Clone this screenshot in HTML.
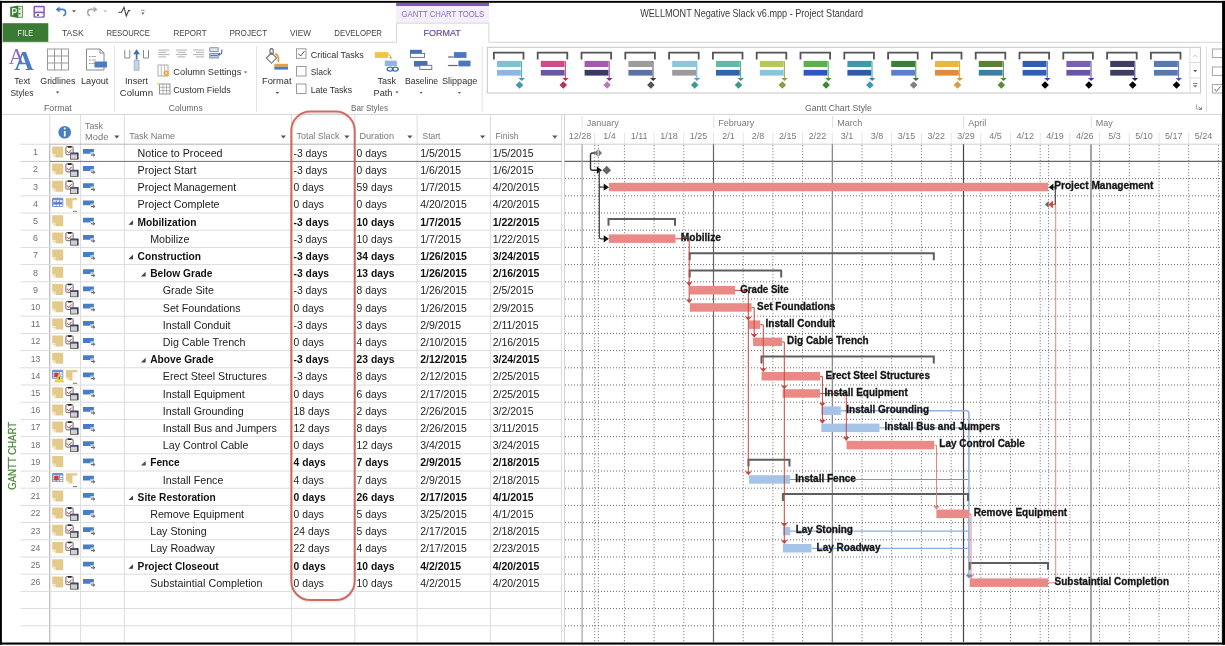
<!DOCTYPE html>
<html><head><meta charset="utf-8"><title>WELLMONT Negative Slack v6.mpp - Project Standard</title>
<style>html,body{margin:0;padding:0;background:#fff;overflow:hidden;width:1225px;height:646px}
svg{display:block;font-family:"Liberation Sans",sans-serif;will-change:transform}</style></head>
<body>
<svg width="1225" height="646" viewBox="0 0 1225 646" font-family="Liberation Sans, sans-serif">
<rect x="0.00" y="0.00" width="1225.00" height="646.00" fill="#fff"/>
<rect x="17.60" y="6.40" width="5.00" height="10.90" fill="#ddf0d6" stroke="#5f8f58" stroke-width="0.9"/>
<path d="M10.2 7.0 L18.2 5.6 V17.9 L10.2 16.6 Z" fill="#3b7a37" stroke="none" stroke-width="1"/>
<rect x="18.60" y="8.30" width="1.80" height="1.30" fill="#3b7a37"/>
<rect x="18.60" y="13.00" width="1.80" height="1.30" fill="#3b7a37"/>
<path d="M12.6 15.3 V8.6 H14.6 Q16.4 8.6 16.4 10.6 Q16.4 12.5 14.6 12.5 H12.6" fill="none" stroke="#dcf0d4" stroke-width="1.3"/>
<rect x="34.20" y="6.60" width="9.90" height="10.30" fill="#f4eefb" stroke="#8a5cb8" stroke-width="1.5" rx="0.6"/>
<rect x="34.20" y="11.60" width="9.90" height="1.80" fill="#8a5cb8"/>
<rect x="36.30" y="13.40" width="5.80" height="3.10" fill="#fff"/>
<rect x="37.20" y="14.20" width="1.60" height="1.80" fill="#444"/>
<path d="M57.5 9.4 H62.3 Q65.6 9.4 65.6 12.4 Q65.6 15 63.2 15.8" fill="none" stroke="#4a7cc0" stroke-width="1.6"/>
<path d="M55.6 9.4 L59.6 6.4 L59.6 12.4 Z" fill="#4a7cc0" stroke="none" stroke-width="1"/>
<path d="M72 10.2 h4 l-2 2.3 z" fill="#555" stroke="none" stroke-width="1"/>
<path d="M95.8 9.4 H91 Q87.7 9.4 87.7 12.4 Q87.7 15 90.1 15.8" fill="none" stroke="#ababab" stroke-width="1.6"/>
<path d="M97.7 9.4 L93.7 6.4 L93.7 12.4 Z" fill="#ababab" stroke="none" stroke-width="1"/>
<path d="M103.5 10.2 h3.5 l-1.75 2.2 z" fill="#bbb" stroke="none" stroke-width="1"/>
<path d="M118.3 12.3 H121.5 L124 7.4 L126.3 16 L128.6 10.6 H130.3" fill="none" stroke="#444" stroke-width="1.1"/>
<line x1="141.20" y1="10.30" x2="144.60" y2="10.30" stroke="#777" stroke-width="0.9"/>
<path d="M141.2 12.6 h3.4 l-1.7 2.2 z" fill="#666" stroke="none" stroke-width="1"/>
<text x="640.2" y="17.1" font-size="10.2" font-weight="400" fill="#3a3a3a" text-anchor="start" textLength="222.8" lengthAdjust="spacingAndGlyphs">WELLMONT Negative Slack v6.mpp - Project Standard</text>
<rect x="2.60" y="23.20" width="45.70" height="18.80" fill="#3b7a34"/>
<text x="17.6" y="35.9" font-size="9.7" font-weight="400" fill="#f0f6ec" text-anchor="start" textLength="15.7" lengthAdjust="spacingAndGlyphs">FILE</text>
<text x="62.0" y="35.9" font-size="9.7" font-weight="400" fill="#444" text-anchor="start" textLength="21.6" lengthAdjust="spacingAndGlyphs">TASK</text>
<text x="106.4" y="35.9" font-size="9.7" font-weight="400" fill="#444" text-anchor="start" textLength="43.6" lengthAdjust="spacingAndGlyphs">RESOURCE</text>
<text x="173.4" y="35.9" font-size="9.7" font-weight="400" fill="#444" text-anchor="start" textLength="33.2" lengthAdjust="spacingAndGlyphs">REPORT</text>
<text x="229.4" y="35.9" font-size="9.7" font-weight="400" fill="#444" text-anchor="start" textLength="37.7" lengthAdjust="spacingAndGlyphs">PROJECT</text>
<text x="290.0" y="35.9" font-size="9.7" font-weight="400" fill="#444" text-anchor="start" textLength="20.9" lengthAdjust="spacingAndGlyphs">VIEW</text>
<text x="334.3" y="35.9" font-size="9.7" font-weight="400" fill="#444" text-anchor="start" textLength="47.7" lengthAdjust="spacingAndGlyphs">DEVELOPER</text>
<rect x="396.20" y="2.80" width="92.80" height="3.40" fill="#7e57c2"/>
<rect x="396.20" y="6.20" width="92.80" height="16.80" fill="#f4effb"/>
<text x="401.5" y="16.6" font-size="8.6" font-weight="400" fill="#8a6cc0" text-anchor="start" textLength="82.8" lengthAdjust="spacingAndGlyphs">GANTT CHART TOOLS</text>
<path d="M396.5 42 V23.2 H488.8 V42" fill="#fff" stroke="#d8d8d8" stroke-width="1"/>
<text x="423.6" y="35.9" font-size="9.7" font-weight="400" fill="#5e40a8" text-anchor="start" textLength="37.2" lengthAdjust="spacingAndGlyphs" stroke="#5e40a8" stroke-width="0.15">FORMAT</text>
<line x1="2.00" y1="42.30" x2="396.50" y2="42.30" stroke="#d6d6d6" stroke-width="1"/>
<line x1="488.80" y1="42.30" x2="1222.00" y2="42.30" stroke="#d6d6d6" stroke-width="1"/>
<line x1="2.00" y1="114.40" x2="1222.00" y2="114.40" stroke="#d4d4d4" stroke-width="1"/>
<line x1="114.60" y1="46.00" x2="114.60" y2="112.00" stroke="#e2e2e2" stroke-width="1"/>
<line x1="256.60" y1="46.00" x2="256.60" y2="112.00" stroke="#e2e2e2" stroke-width="1"/>
<line x1="482.20" y1="46.00" x2="482.20" y2="112.00" stroke="#e2e2e2" stroke-width="1"/>
<line x1="1206.50" y1="46.00" x2="1206.50" y2="112.00" stroke="#e2e2e2" stroke-width="1"/>
<text x="44.0" y="111.2" font-size="9.4" font-weight="400" fill="#666" text-anchor="start" textLength="27.8" lengthAdjust="spacingAndGlyphs">Format</text>
<text x="168.8" y="111.2" font-size="9.4" font-weight="400" fill="#666" text-anchor="start" textLength="33.9" lengthAdjust="spacingAndGlyphs">Columns</text>
<text x="351.0" y="111.2" font-size="9.4" font-weight="400" fill="#666" text-anchor="start" textLength="37.0" lengthAdjust="spacingAndGlyphs">Bar Styles</text>
<text x="805.0" y="111.2" font-size="9.4" font-weight="400" fill="#666" text-anchor="start" textLength="66.8" lengthAdjust="spacingAndGlyphs">Gantt Chart Style</text>
<text x="14.2" y="84.0" font-size="9.5" font-weight="400" fill="#303030" text-anchor="start" textLength="16.1" lengthAdjust="spacingAndGlyphs">Text</text>
<text x="10.5" y="95.5" font-size="9.5" font-weight="400" fill="#303030" text-anchor="start" textLength="22.9" lengthAdjust="spacingAndGlyphs">Styles</text>
<text x="40.2" y="84.0" font-size="9.5" font-weight="400" fill="#303030" text-anchor="start" textLength="35.3" lengthAdjust="spacingAndGlyphs">Gridlines</text>
<path d="M55.8 91.5 h3.6 l-1.8 2 z" fill="#555" stroke="none" stroke-width="1"/>
<text x="81.0" y="84.0" font-size="9.5" font-weight="400" fill="#303030" text-anchor="start" textLength="27.4" lengthAdjust="spacingAndGlyphs">Layout</text>
<text x="8.4" y="63.6" font-family="Liberation Serif" font-size="22.5" fill="#9466c4">A</text>
<text x="14.2" y="70.2" font-family="Liberation Serif" font-size="28" font-weight="700" fill="#4d7cc2" textLength="19.5" lengthAdjust="spacingAndGlyphs">A</text>
<rect x="47.50" y="49.00" width="21.00" height="21.00" fill="none" stroke="#9a9a9a" stroke-width="1"/>
<line x1="54.50" y1="49.00" x2="54.50" y2="70.00" stroke="#9a9a9a" stroke-width="1"/>
<line x1="47.50" y1="56.00" x2="68.50" y2="56.00" stroke="#9a9a9a" stroke-width="1"/>
<line x1="61.50" y1="49.00" x2="61.50" y2="70.00" stroke="#9a9a9a" stroke-width="1"/>
<line x1="47.50" y1="63.00" x2="68.50" y2="63.00" stroke="#9a9a9a" stroke-width="1"/>
<path d="M86.5 49 H100 L104 53 V70 H86.5 Z" fill="#fff" stroke="#8a8a8a" stroke-width="1"/>
<path d="M100 49 V53 H104" fill="none" stroke="#8a8a8a" stroke-width="1"/>
<line x1="89.00" y1="56.50" x2="90.50" y2="56.50" stroke="#8a8a8a" stroke-width="1"/>
<line x1="91.50" y1="56.50" x2="96.00" y2="56.50" stroke="#aaa" stroke-width="1"/>
<line x1="89.00" y1="60.00" x2="90.50" y2="60.00" stroke="#8a8a8a" stroke-width="1"/>
<line x1="91.50" y1="60.00" x2="96.00" y2="60.00" stroke="#aaa" stroke-width="1"/>
<line x1="89.00" y1="63.50" x2="90.50" y2="63.50" stroke="#8a8a8a" stroke-width="1"/>
<line x1="91.50" y1="63.50" x2="96.00" y2="63.50" stroke="#aaa" stroke-width="1"/>
<rect x="94.50" y="61.50" width="12.50" height="6.00" fill="#4d7cc2"/>
<text x="125.0" y="83.7" font-size="9.5" font-weight="400" fill="#303030" text-anchor="start" textLength="22.9" lengthAdjust="spacingAndGlyphs">Insert</text>
<text x="119.8" y="96.0" font-size="9.5" font-weight="400" fill="#303030" text-anchor="start" textLength="33.2" lengthAdjust="spacingAndGlyphs">Column</text>
<path d="M124.8 50 V58 H129.8 V50" fill="none" stroke="#8a8a8a" stroke-width="1"/>
<path d="M143.5 50 V58 H148.5 V50" fill="none" stroke="#8a8a8a" stroke-width="1"/>
<rect x="134.20" y="60.20" width="4.80" height="10.00" fill="#c4d4ea" stroke="#9aaac0" stroke-width="0.8"/>
<line x1="136.60" y1="52.00" x2="136.60" y2="59.50" stroke="#3d6fb6" stroke-width="1.7"/>
<path d="M133.2 54.2 L136.6 49.2 L140 54.2 Z" fill="#3d6fb6" stroke="none" stroke-width="1"/>
<line x1="158.30" y1="50.00" x2="169.30" y2="50.00" stroke="#b0b0b0" stroke-width="1"/>
<line x1="158.30" y1="52.30" x2="166.30" y2="52.30" stroke="#b0b0b0" stroke-width="1"/>
<line x1="158.30" y1="54.60" x2="169.30" y2="54.60" stroke="#b0b0b0" stroke-width="1"/>
<line x1="158.30" y1="56.90" x2="166.30" y2="56.90" stroke="#b0b0b0" stroke-width="1"/>
<line x1="176.00" y1="50.00" x2="187.00" y2="50.00" stroke="#b0b0b0" stroke-width="1"/>
<line x1="177.50" y1="52.30" x2="185.50" y2="52.30" stroke="#b0b0b0" stroke-width="1"/>
<line x1="176.00" y1="54.60" x2="187.00" y2="54.60" stroke="#b0b0b0" stroke-width="1"/>
<line x1="177.50" y1="56.90" x2="185.50" y2="56.90" stroke="#b0b0b0" stroke-width="1"/>
<line x1="193.00" y1="50.00" x2="204.00" y2="50.00" stroke="#b0b0b0" stroke-width="1"/>
<line x1="196.00" y1="52.30" x2="204.00" y2="52.30" stroke="#b0b0b0" stroke-width="1"/>
<line x1="193.00" y1="54.60" x2="204.00" y2="54.60" stroke="#b0b0b0" stroke-width="1"/>
<line x1="196.00" y1="56.90" x2="204.00" y2="56.90" stroke="#b0b0b0" stroke-width="1"/>
<rect x="209.80" y="47.80" width="8.40" height="3.60" fill="#dfe7f2" stroke="#6a7a90" stroke-width="0.8"/>
<rect x="209.80" y="53.60" width="8.40" height="4.40" fill="#c8d6ea" stroke="#6a7a90" stroke-width="0.8"/>
<line x1="210.50" y1="55.50" x2="217.50" y2="55.50" stroke="#4a7cc0" stroke-width="1.2"/>
<path d="M221.8 49.5 V52.5 Q221.8 54.2 220 54.2 H218.8" fill="none" stroke="#3d6fb6" stroke-width="1.1"/>
<path d="M217.8 54.2 L220 52.4 L220 56 Z" fill="#3d6fb6" stroke="none" stroke-width="1"/>
<text x="173.3" y="75.3" font-size="9.5" font-weight="400" fill="#303030" text-anchor="start" textLength="68.0" lengthAdjust="spacingAndGlyphs">Column Settings</text>
<path d="M244 71.5 h3.2 l-1.6 1.8 z" fill="#555" stroke="none" stroke-width="1"/>
<rect x="158.00" y="65.00" width="10.00" height="11.00" fill="#fff" stroke="#999" stroke-width="0.8"/>
<line x1="161.30" y1="65.00" x2="161.30" y2="76.00" stroke="#aaa" stroke-width="0.8"/>
<line x1="164.60" y1="65.00" x2="164.60" y2="76.00" stroke="#aaa" stroke-width="0.8"/>
<polygon points="169.80,73.20 168.23,74.04 168.75,75.75 167.04,75.23 166.20,76.80 165.36,75.23 163.65,75.75 164.17,74.04 162.60,73.20 164.17,72.36 163.65,70.65 165.36,71.17 166.20,69.60 167.04,71.17 168.75,70.65 168.23,72.36" fill="#f2a23a"/>
<circle cx="166.2" cy="73.2" r="1" fill="#fff3d8"/>
<text x="173.3" y="92.9" font-size="9.5" font-weight="400" fill="#303030" text-anchor="start" textLength="57.5" lengthAdjust="spacingAndGlyphs">Custom Fields</text>
<rect x="159.50" y="84.00" width="10.50" height="10.00" fill="#fff" stroke="#888" stroke-width="0.9"/>
<line x1="163.00" y1="84.00" x2="163.00" y2="94.00" stroke="#999" stroke-width="0.7"/>
<line x1="166.50" y1="84.00" x2="166.50" y2="94.00" stroke="#999" stroke-width="0.7"/>
<line x1="159.50" y1="87.30" x2="170.00" y2="87.30" stroke="#999" stroke-width="0.7"/>
<line x1="159.50" y1="90.60" x2="170.00" y2="90.60" stroke="#999" stroke-width="0.7"/>
<circle cx="158.5" cy="84" r="1.3" fill="#f5d060"/>
<text x="262.0" y="84.0" font-size="9.5" font-weight="400" fill="#303030" text-anchor="start" textLength="29.5" lengthAdjust="spacingAndGlyphs">Format</text>
<path d="M275.5 92 h3.6 l-1.8 2 z" fill="#555" stroke="none" stroke-width="1"/>
<path d="M275.2 53.6 Q279.6 55.2 278.2 62" fill="none" stroke="#e8a040" stroke-width="1.8"/>
<path d="M266.3 58 L271.6 52.8 L276.7 58 L271.4 63.3 Z" fill="#fff" stroke="#7a7a7a" stroke-width="1.1"/>
<ellipse cx="271.6" cy="51.4" rx="1.7" ry="2.8" fill="none" stroke="#666" stroke-width="1.1"/>
<rect x="274.30" y="63.80" width="13.70" height="2.90" fill="#e8a040"/>
<rect x="274.30" y="66.70" width="13.70" height="2.90" fill="#4d7cc2"/>
<rect x="296.50" y="48.80" width="9.50" height="9.50" fill="#fff" stroke="#9a9a9a" stroke-width="1"/>
<path d="M298.3 53.599999999999994 L300.6 56.0 L304.6 51.0" fill="none" stroke="#555" stroke-width="1"/>
<text x="310.7" y="57.6" font-size="9.5" font-weight="400" fill="#303030" text-anchor="start" textLength="53.0" lengthAdjust="spacingAndGlyphs">Critical Tasks</text>
<rect x="296.50" y="66.50" width="9.50" height="9.50" fill="#fff" stroke="#9a9a9a" stroke-width="1"/>
<text x="310.7" y="75.3" font-size="9.5" font-weight="400" fill="#303030" text-anchor="start" textLength="20.7" lengthAdjust="spacingAndGlyphs">Slack</text>
<rect x="296.50" y="84.00" width="9.50" height="9.50" fill="#fff" stroke="#9a9a9a" stroke-width="1"/>
<text x="310.7" y="92.8" font-size="9.5" font-weight="400" fill="#303030" text-anchor="start" textLength="41.3" lengthAdjust="spacingAndGlyphs">Late Tasks</text>
<text x="377.4" y="84.0" font-size="9.5" font-weight="400" fill="#303030" text-anchor="start" textLength="18.6" lengthAdjust="spacingAndGlyphs">Task</text>
<text x="373.5" y="95.8" font-size="9.5" font-weight="400" fill="#303030" text-anchor="start" textLength="19.0" lengthAdjust="spacingAndGlyphs">Path</text>
<path d="M395.5 91.5 h3.2 l-1.8 2 z" fill="#555" stroke="none" stroke-width="1"/>
<rect x="374.90" y="52.10" width="13.10" height="5.80" fill="#f2c34a"/>
<path d="M388 54.6 Q390.8 54.6 390.8 57.4" fill="none" stroke="#f0a030" stroke-width="1"/>
<path d="M389.2 57 L390.8 59.2 L392.4 57 Z" fill="#f0a030" stroke="none" stroke-width="1"/>
<rect x="384.80" y="60.60" width="12.10" height="5.40" fill="#8fb5e8"/>
<ellipse cx="390.2" cy="69.1" rx="3" ry="2" fill="none" stroke="#4a70b0" stroke-width="1.4"/>
<ellipse cx="395.2" cy="69.1" rx="3" ry="2" fill="none" stroke="#4a70b0" stroke-width="1.4"/>
<text x="404.9" y="84.0" font-size="9.5" font-weight="400" fill="#303030" text-anchor="start" textLength="33.1" lengthAdjust="spacingAndGlyphs">Baseline</text>
<path d="M419.5 92 h3.2 l-1.6 1.8 z" fill="#555" stroke="none" stroke-width="1"/>
<rect x="410.00" y="49.80" width="11.90" height="3.20" fill="#4a70b0"/>
<rect x="410.40" y="53.40" width="14.20" height="4.00" fill="#fff" stroke="#4a70b0" stroke-width="0.9"/>
<rect x="414.00" y="61.00" width="13.50" height="5.60" fill="#4a70b0"/>
<rect x="419.80" y="65.30" width="12.00" height="4.20" fill="#fff" stroke="#4a70b0" stroke-width="0.9"/>
<text x="442.0" y="84.0" font-size="9.5" font-weight="400" fill="#303030" text-anchor="start" textLength="35.3" lengthAdjust="spacingAndGlyphs">Slippage</text>
<path d="M457.8 92 h3.2 l-1.6 1.8 z" fill="#555" stroke="none" stroke-width="1"/>
<rect x="453.90" y="52.10" width="12.60" height="5.80" fill="#4d78b8"/>
<line x1="448.10" y1="57.00" x2="453.60" y2="57.00" stroke="#666" stroke-width="1.2"/>
<rect x="458.40" y="60.60" width="12.10" height="5.80" fill="#4d78b8"/>
<line x1="448.10" y1="65.50" x2="457.80" y2="65.50" stroke="#666" stroke-width="1.2"/>
<rect x="487.30" y="47.30" width="713.20" height="45.70" fill="#fff" stroke="#c6c6c6" stroke-width="1"/>
<line x1="1189.90" y1="47.30" x2="1189.90" y2="93.00" stroke="#dcdcdc" stroke-width="1"/>
<line x1="1189.90" y1="62.50" x2="1200.50" y2="62.50" stroke="#dcdcdc" stroke-width="1"/>
<line x1="1189.90" y1="78.00" x2="1200.50" y2="78.00" stroke="#dcdcdc" stroke-width="1"/>
<path d="M1193.2 57 l2 -2 l2 2" fill="none" stroke="#bbb" stroke-width="0.9"/>
<path d="M1193 70 h4.4 l-2.2 2.3 z" fill="#666" stroke="none" stroke-width="1"/>
<line x1="1193.00" y1="83.50" x2="1197.40" y2="83.50" stroke="#777" stroke-width="0.9"/>
<path d="M1193 85.3 h4.4 l-2.2 2.3 z" fill="#777" stroke="none" stroke-width="1"/>
<path d="M493.90 59.6 V52.7 H523.50 V59.6" fill="none" stroke="#555" stroke-width="1.8"/>
<rect x="497.00" y="60.90" width="23.80" height="6.10" fill="#7cc3cf"/>
<rect x="497.00" y="69.90" width="23.80" height="5.70" fill="#8fb4e8"/>
<path d="M520.80 61.5 h0.8 v17" fill="none" stroke="#3f9aaa" stroke-width="0.9"/>
<path d="M518.50 78 h6.5 l-3.25 3 z" fill="#3f9aaa" stroke="none" stroke-width="1"/>
<path d="M519.50 81.2 l3.8 3.8 l-3.8 3.8 l-3.8 -3.8 z" fill="#3f9aaa" stroke="none" stroke-width="1"/>
<path d="M537.70 59.6 V52.7 H567.30 V59.6" fill="none" stroke="#555" stroke-width="1.8"/>
<rect x="540.80" y="60.90" width="23.80" height="6.10" fill="#d14a85"/>
<rect x="540.80" y="69.90" width="23.80" height="5.70" fill="#6a56a0"/>
<path d="M564.60 61.5 h0.8 v17" fill="none" stroke="#b8305f" stroke-width="0.9"/>
<path d="M562.30 78 h6.5 l-3.25 3 z" fill="#b8305f" stroke="none" stroke-width="1"/>
<path d="M563.30 81.2 l3.8 3.8 l-3.8 3.8 l-3.8 -3.8 z" fill="#b8305f" stroke="none" stroke-width="1"/>
<path d="M581.50 59.6 V52.7 H611.10 V59.6" fill="none" stroke="#555" stroke-width="1.8"/>
<rect x="584.60" y="60.90" width="23.80" height="6.10" fill="#a35aac"/>
<rect x="584.60" y="69.90" width="23.80" height="5.70" fill="#3c3a62"/>
<path d="M608.40 61.5 h0.8 v17" fill="none" stroke="#8b2a8a" stroke-width="0.9"/>
<path d="M606.10 78 h6.5 l-3.25 3 z" fill="#8b2a8a" stroke="none" stroke-width="1"/>
<path d="M607.10 81.2 l3.8 3.8 l-3.8 3.8 l-3.8 -3.8 z" fill="#b57ac2" stroke="none" stroke-width="1"/>
<path d="M625.30 59.6 V52.7 H654.90 V59.6" fill="none" stroke="#555" stroke-width="1.8"/>
<rect x="628.40" y="60.90" width="23.80" height="6.10" fill="#9c9c9c"/>
<rect x="628.40" y="69.90" width="23.80" height="5.70" fill="#5a72a8"/>
<path d="M652.20 61.5 h0.8 v17" fill="none" stroke="#3a3a3a" stroke-width="0.9"/>
<path d="M649.90 78 h6.5 l-3.25 3 z" fill="#3a3a3a" stroke="none" stroke-width="1"/>
<path d="M650.90 81.2 l3.8 3.8 l-3.8 3.8 l-3.8 -3.8 z" fill="#555555" stroke="none" stroke-width="1"/>
<path d="M669.10 59.6 V52.7 H698.70 V59.6" fill="none" stroke="#555" stroke-width="1.8"/>
<rect x="672.20" y="60.90" width="23.80" height="6.10" fill="#8bc6d9"/>
<rect x="672.20" y="69.90" width="23.80" height="5.70" fill="#9b9b9b"/>
<path d="M696.00 61.5 h0.8 v17" fill="none" stroke="#4aa6c8" stroke-width="0.9"/>
<path d="M693.70 78 h6.5 l-3.25 3 z" fill="#4aa6c8" stroke="none" stroke-width="1"/>
<path d="M694.70 81.2 l3.8 3.8 l-3.8 3.8 l-3.8 -3.8 z" fill="#3f9a90" stroke="none" stroke-width="1"/>
<path d="M712.90 59.6 V52.7 H742.50 V59.6" fill="none" stroke="#555" stroke-width="1.8"/>
<rect x="716.00" y="60.90" width="23.80" height="6.10" fill="#5fbba4"/>
<rect x="716.00" y="69.90" width="23.80" height="5.70" fill="#2f66aa"/>
<path d="M739.80 61.5 h0.8 v17" fill="none" stroke="#3a9a8a" stroke-width="0.9"/>
<path d="M737.50 78 h6.5 l-3.25 3 z" fill="#3a9a8a" stroke="none" stroke-width="1"/>
<path d="M738.50 81.2 l3.8 3.8 l-3.8 3.8 l-3.8 -3.8 z" fill="#3a9a8a" stroke="none" stroke-width="1"/>
<path d="M756.70 59.6 V52.7 H786.30 V59.6" fill="none" stroke="#555" stroke-width="1.8"/>
<rect x="759.80" y="60.90" width="23.80" height="6.10" fill="#b5c95a"/>
<rect x="759.80" y="69.90" width="23.80" height="5.70" fill="#88c5d9"/>
<path d="M783.60 61.5 h0.8 v17" fill="none" stroke="#8aa03a" stroke-width="0.9"/>
<path d="M781.30 78 h6.5 l-3.25 3 z" fill="#8aa03a" stroke="none" stroke-width="1"/>
<path d="M782.30 81.2 l3.8 3.8 l-3.8 3.8 l-3.8 -3.8 z" fill="#88a03a" stroke="none" stroke-width="1"/>
<path d="M800.50 59.6 V52.7 H830.10 V59.6" fill="none" stroke="#555" stroke-width="1.8"/>
<rect x="803.60" y="60.90" width="23.80" height="6.10" fill="#5bb04b"/>
<rect x="803.60" y="69.90" width="23.80" height="5.70" fill="#2f57bf"/>
<path d="M827.40 61.5 h0.8 v17" fill="none" stroke="#3f9a3a" stroke-width="0.9"/>
<path d="M825.10 78 h6.5 l-3.25 3 z" fill="#3f9a3a" stroke="none" stroke-width="1"/>
<path d="M826.10 81.2 l3.8 3.8 l-3.8 3.8 l-3.8 -3.8 z" fill="#3a8a2e" stroke="none" stroke-width="1"/>
<path d="M844.30 59.6 V52.7 H873.90 V59.6" fill="none" stroke="#555" stroke-width="1.8"/>
<rect x="847.40" y="60.90" width="23.80" height="6.10" fill="#3d9ba6"/>
<rect x="847.40" y="69.90" width="23.80" height="5.70" fill="#2f5aa8"/>
<path d="M871.20 61.5 h0.8 v17" fill="none" stroke="#2a8aa8" stroke-width="0.9"/>
<path d="M868.90 78 h6.5 l-3.25 3 z" fill="#2a8aa8" stroke="none" stroke-width="1"/>
<path d="M869.90 81.2 l3.8 3.8 l-3.8 3.8 l-3.8 -3.8 z" fill="#3a9ab0" stroke="none" stroke-width="1"/>
<path d="M888.10 59.6 V52.7 H917.70 V59.6" fill="none" stroke="#555" stroke-width="1.8"/>
<rect x="891.20" y="60.90" width="23.80" height="6.10" fill="#3f7d3a"/>
<rect x="891.20" y="69.90" width="23.80" height="5.70" fill="#5a7fd0"/>
<path d="M915.00 61.5 h0.8 v17" fill="none" stroke="#2f7a2a" stroke-width="0.9"/>
<path d="M912.70 78 h6.5 l-3.25 3 z" fill="#2f7a2a" stroke="none" stroke-width="1"/>
<path d="M913.70 81.2 l3.8 3.8 l-3.8 3.8 l-3.8 -3.8 z" fill="#808080" stroke="none" stroke-width="1"/>
<path d="M931.90 59.6 V52.7 H961.50 V59.6" fill="none" stroke="#555" stroke-width="1.8"/>
<rect x="935.00" y="60.90" width="23.80" height="6.10" fill="#e8b93c"/>
<rect x="935.00" y="69.90" width="23.80" height="5.70" fill="#e08a3c"/>
<path d="M958.80 61.5 h0.8 v17" fill="none" stroke="#d89a2a" stroke-width="0.9"/>
<path d="M956.50 78 h6.5 l-3.25 3 z" fill="#d89a2a" stroke="none" stroke-width="1"/>
<path d="M957.50 81.2 l3.8 3.8 l-3.8 3.8 l-3.8 -3.8 z" fill="#d4a040" stroke="none" stroke-width="1"/>
<path d="M975.70 59.6 V52.7 H1005.30 V59.6" fill="none" stroke="#555" stroke-width="1.8"/>
<rect x="978.80" y="60.90" width="23.80" height="6.10" fill="#5e7f36"/>
<rect x="978.80" y="69.90" width="23.80" height="5.70" fill="#3a80a2"/>
<path d="M1002.60 61.5 h0.8 v17" fill="none" stroke="#4a8a2a" stroke-width="0.9"/>
<path d="M1000.30 78 h6.5 l-3.25 3 z" fill="#4a8a2a" stroke="none" stroke-width="1"/>
<path d="M1001.30 81.2 l3.8 3.8 l-3.8 3.8 l-3.8 -3.8 z" fill="#5e8a36" stroke="none" stroke-width="1"/>
<path d="M1019.50 59.6 V52.7 H1049.10 V59.6" fill="none" stroke="#555" stroke-width="1.8"/>
<rect x="1022.60" y="60.90" width="23.80" height="6.10" fill="#2f5fb2"/>
<rect x="1022.60" y="69.90" width="23.80" height="5.70" fill="#2f5fb2"/>
<path d="M1046.40 61.5 h0.8 v17" fill="none" stroke="#2a4ab8" stroke-width="0.9"/>
<path d="M1044.10 78 h6.5 l-3.25 3 z" fill="#2a4ab8" stroke="none" stroke-width="1"/>
<path d="M1045.10 81.2 l3.8 3.8 l-3.8 3.8 l-3.8 -3.8 z" fill="#000000" stroke="none" stroke-width="1"/>
<path d="M1063.30 59.6 V52.7 H1092.90 V59.6" fill="none" stroke="#555" stroke-width="1.8"/>
<rect x="1066.40" y="60.90" width="23.80" height="6.10" fill="#7a5fb2"/>
<rect x="1066.40" y="69.90" width="23.80" height="5.70" fill="#6a56a8"/>
<path d="M1090.20 61.5 h0.8 v17" fill="none" stroke="#3a3ab0" stroke-width="0.9"/>
<path d="M1087.90 78 h6.5 l-3.25 3 z" fill="#3a3ab0" stroke="none" stroke-width="1"/>
<path d="M1088.90 81.2 l3.8 3.8 l-3.8 3.8 l-3.8 -3.8 z" fill="#000000" stroke="none" stroke-width="1"/>
<path d="M1107.10 59.6 V52.7 H1136.70 V59.6" fill="none" stroke="#555" stroke-width="1.8"/>
<rect x="1110.20" y="60.90" width="23.80" height="6.10" fill="#3f3c62"/>
<rect x="1110.20" y="69.90" width="23.80" height="5.70" fill="#3f3c62"/>
<path d="M1134.00 61.5 h0.8 v17" fill="none" stroke="#202070" stroke-width="0.9"/>
<path d="M1131.70 78 h6.5 l-3.25 3 z" fill="#202070" stroke="none" stroke-width="1"/>
<path d="M1132.70 81.2 l3.8 3.8 l-3.8 3.8 l-3.8 -3.8 z" fill="#000000" stroke="none" stroke-width="1"/>
<path d="M1150.90 59.6 V52.7 H1180.50 V59.6" fill="none" stroke="#555" stroke-width="1.8"/>
<rect x="1154.00" y="60.90" width="23.80" height="6.10" fill="#5a78b0"/>
<rect x="1154.00" y="69.90" width="23.80" height="5.70" fill="#5a78b0"/>
<path d="M1177.80 61.5 h0.8 v17" fill="none" stroke="#3a5ac0" stroke-width="0.9"/>
<path d="M1175.50 78 h6.5 l-3.25 3 z" fill="#3a5ac0" stroke="none" stroke-width="1"/>
<path d="M1176.50 81.2 l3.8 3.8 l-3.8 3.8 l-3.8 -3.8 z" fill="#000000" stroke="none" stroke-width="1"/>
<path d="M1196.5 104.5 v4.5 h4.5" fill="none" stroke="#999" stroke-width="0.8"/>
<path d="M1198.5 106.5 l3 3 m-2.5 0 h2.5 v-2.5" fill="none" stroke="#777" stroke-width="0.8"/>
<rect x="1212.40" y="49.00" width="12.00" height="8.50" fill="#fff" stroke="#a8a8a8" stroke-width="1"/>
<rect x="1212.40" y="67.00" width="12.00" height="8.50" fill="#fff" stroke="#a8a8a8" stroke-width="1"/>
<rect x="1212.40" y="84.50" width="12.00" height="8.50" fill="#fff" stroke="#a8a8a8" stroke-width="1"/>
<path d="M1214.5 89.0 L1216.5 91.3 L1220.5 86.5" fill="none" stroke="#666" stroke-width="1"/>
<line x1="80.60" y1="114.40" x2="80.60" y2="642.00" stroke="#dcdcdc" stroke-width="1"/>
<line x1="124.30" y1="114.40" x2="124.30" y2="642.00" stroke="#dcdcdc" stroke-width="1"/>
<line x1="291.50" y1="114.40" x2="291.50" y2="642.00" stroke="#dcdcdc" stroke-width="1"/>
<line x1="354.80" y1="114.40" x2="354.80" y2="642.00" stroke="#dcdcdc" stroke-width="1"/>
<line x1="417.10" y1="114.40" x2="417.10" y2="642.00" stroke="#dcdcdc" stroke-width="1"/>
<line x1="490.40" y1="114.40" x2="490.40" y2="642.00" stroke="#dcdcdc" stroke-width="1"/>
<line x1="561.60" y1="114.40" x2="561.60" y2="642.00" stroke="#dcdcdc" stroke-width="1"/>
<line x1="49.80" y1="114.40" x2="49.80" y2="144.20" stroke="#dcdcdc" stroke-width="1"/>
<line x1="49.80" y1="144.20" x2="49.80" y2="642.00" stroke="#a9a9a9" stroke-width="1"/>
<line x1="564.60" y1="114.40" x2="564.60" y2="642.00" stroke="#d0d0d0" stroke-width="1"/>
<line x1="20.50" y1="144.20" x2="49.80" y2="144.20" stroke="#dadada" stroke-width="1"/>
<line x1="49.80" y1="144.20" x2="561.60" y2="144.20" stroke="#b4b4b4" stroke-width="1"/>
<line x1="20.50" y1="161.40" x2="49.80" y2="161.40" stroke="#cfcfcf" stroke-width="1"/>
<line x1="49.80" y1="161.40" x2="561.60" y2="161.40" stroke="#707070" stroke-width="1"/>
<line x1="20.50" y1="178.60" x2="561.60" y2="178.60" stroke="#dcdcdc" stroke-width="1"/>
<line x1="20.50" y1="195.80" x2="561.60" y2="195.80" stroke="#dcdcdc" stroke-width="1"/>
<line x1="20.50" y1="213.00" x2="561.60" y2="213.00" stroke="#dcdcdc" stroke-width="1"/>
<line x1="20.50" y1="230.20" x2="561.60" y2="230.20" stroke="#dcdcdc" stroke-width="1"/>
<line x1="20.50" y1="247.40" x2="561.60" y2="247.40" stroke="#dcdcdc" stroke-width="1"/>
<line x1="20.50" y1="264.60" x2="561.60" y2="264.60" stroke="#dcdcdc" stroke-width="1"/>
<line x1="20.50" y1="281.80" x2="561.60" y2="281.80" stroke="#dcdcdc" stroke-width="1"/>
<line x1="20.50" y1="299.00" x2="561.60" y2="299.00" stroke="#dcdcdc" stroke-width="1"/>
<line x1="20.50" y1="316.20" x2="561.60" y2="316.20" stroke="#dcdcdc" stroke-width="1"/>
<line x1="20.50" y1="333.40" x2="561.60" y2="333.40" stroke="#dcdcdc" stroke-width="1"/>
<line x1="20.50" y1="350.60" x2="561.60" y2="350.60" stroke="#dcdcdc" stroke-width="1"/>
<line x1="20.50" y1="367.80" x2="561.60" y2="367.80" stroke="#dcdcdc" stroke-width="1"/>
<line x1="20.50" y1="385.00" x2="561.60" y2="385.00" stroke="#dcdcdc" stroke-width="1"/>
<line x1="20.50" y1="402.20" x2="561.60" y2="402.20" stroke="#dcdcdc" stroke-width="1"/>
<line x1="20.50" y1="419.40" x2="561.60" y2="419.40" stroke="#dcdcdc" stroke-width="1"/>
<line x1="20.50" y1="436.60" x2="561.60" y2="436.60" stroke="#dcdcdc" stroke-width="1"/>
<line x1="20.50" y1="453.80" x2="561.60" y2="453.80" stroke="#dcdcdc" stroke-width="1"/>
<line x1="20.50" y1="471.00" x2="561.60" y2="471.00" stroke="#dcdcdc" stroke-width="1"/>
<line x1="20.50" y1="488.20" x2="561.60" y2="488.20" stroke="#dcdcdc" stroke-width="1"/>
<line x1="20.50" y1="505.40" x2="561.60" y2="505.40" stroke="#dcdcdc" stroke-width="1"/>
<line x1="20.50" y1="522.60" x2="561.60" y2="522.60" stroke="#dcdcdc" stroke-width="1"/>
<line x1="20.50" y1="539.80" x2="561.60" y2="539.80" stroke="#dcdcdc" stroke-width="1"/>
<line x1="20.50" y1="557.00" x2="561.60" y2="557.00" stroke="#dcdcdc" stroke-width="1"/>
<line x1="20.50" y1="574.20" x2="561.60" y2="574.20" stroke="#dcdcdc" stroke-width="1"/>
<line x1="20.50" y1="591.40" x2="561.60" y2="591.40" stroke="#dcdcdc" stroke-width="1"/>
<line x1="20.50" y1="608.60" x2="561.60" y2="608.60" stroke="#dcdcdc" stroke-width="1"/>
<line x1="20.50" y1="625.80" x2="561.60" y2="625.80" stroke="#dcdcdc" stroke-width="1"/>
<circle cx="64.7" cy="132.2" r="6.3" fill="#4a7ec2"/>
<rect x="63.90" y="131.00" width="1.70" height="5.50" fill="#fff"/>
<circle cx="64.75" cy="128.6" r="1" fill="#fff"/>
<text x="85.0" y="128.6" font-size="9.7" font-weight="400" fill="#787878" text-anchor="start" textLength="18.0" lengthAdjust="spacingAndGlyphs">Task</text>
<text x="85.0" y="139.8" font-size="9.7" font-weight="400" fill="#787878" text-anchor="start" textLength="23.4" lengthAdjust="spacingAndGlyphs">Mode</text>
<path d="M114.2 135.6 h5.2 l-2.6 3 z" fill="#555" stroke="none" stroke-width="1"/>
<text x="129.3" y="139.0" font-size="9.8" font-weight="400" fill="#787878" text-anchor="start" textLength="45.9" lengthAdjust="spacingAndGlyphs">Task Name</text>
<path d="M280.8 135.6 h5.2 l-2.6 3 z" fill="#555" stroke="none" stroke-width="1"/>
<text x="296.6" y="138.5" font-size="9.8" font-weight="400" fill="#787878" text-anchor="start" textLength="42.8" lengthAdjust="spacingAndGlyphs">Total Slack</text>
<path d="M344.3 135.4 h5.2 l-2.6 3 z" fill="#555" stroke="none" stroke-width="1"/>
<text x="359.4" y="138.8" font-size="9.8" font-weight="400" fill="#787878" text-anchor="start" textLength="34.6" lengthAdjust="spacingAndGlyphs">Duration</text>
<path d="M407.3 135.6 h5.2 l-2.6 3 z" fill="#555" stroke="none" stroke-width="1"/>
<text x="422.6" y="138.8" font-size="9.8" font-weight="400" fill="#787878" text-anchor="start" textLength="17.8" lengthAdjust="spacingAndGlyphs">Start</text>
<path d="M480 135.6 h5.2 l-2.6 3 z" fill="#555" stroke="none" stroke-width="1"/>
<text x="495.5" y="138.8" font-size="9.8" font-weight="400" fill="#787878" text-anchor="start" textLength="23.1" lengthAdjust="spacingAndGlyphs">Finish</text>
<path d="M552.2 135.6 h5.2 l-2.6 3 z" fill="#555" stroke="none" stroke-width="1"/>
<text x="0" y="0" font-size="10.8" fill="#4e8a3e" stroke="#4e8a3e" stroke-width="0.25" transform="translate(15.8,489.7) rotate(-90)" textLength="67.7" lengthAdjust="spacingAndGlyphs">GANTT CHART</text>
<text x="35.6" y="155.2" font-size="9.8" font-weight="400" fill="#707070" text-anchor="middle" textLength="5.0" lengthAdjust="spacingAndGlyphs">1</text>
<path d="M52.2 146.39999999999998 h11 v11 h-8 l-3 -3 z" fill="#e3c98a" stroke="none" stroke-width="1"/>
<path d="M52.2 154.39999999999998 h3 v3" fill="none" stroke="#fff6dc" stroke-width="0.9"/>
<rect x="65.90" y="146.60" width="7.20" height="8.10" fill="#fdf8f8" stroke="#6a6a6a" stroke-width="1" rx="1"/>
<rect x="67.80" y="146.10" width="3.80" height="1.60" fill="#222" rx="0.5"/>
<path d="M67.0 151.2 l1.8 1.7 l2.8 -3.2" fill="none" stroke="#c0392b" stroke-width="1"/>
<rect x="70.50" y="152.90" width="7.40" height="6.30" fill="#d0d0d0" stroke="#555" stroke-width="0.8"/>
<rect x="70.50" y="152.90" width="7.40" height="1.50" fill="#3a4a8a"/>
<line x1="77.90" y1="152.90" x2="77.90" y2="159.20" stroke="#222" stroke-width="1"/>
<path d="M83 148.89999999999998 H93.9 V152.1 H90.6 V153.7 H83 Z" fill="#4a7ec4" stroke="none" stroke-width="1"/>
<rect x="90.60" y="152.10" width="3.30" height="1.60" fill="#a9c6ec"/>
<path d="M90.8 155.0 H93.6" fill="none" stroke="#6a6a6a" stroke-width="1.2"/>
<path d="M93.2 153.0 L95.4 155.0 L93.2 157.0 Z" fill="#6a6a6a" stroke="none" stroke-width="1"/>
<text x="137.6" y="156.7" font-size="10.7" font-weight="400" fill="#1c1c1c" text-anchor="start">Notice to Proceed</text>
<text x="293.6" y="156.7" font-size="10.3" font-weight="400" fill="#1c1c1c" text-anchor="start">-3 days</text>
<text x="356.6" y="156.7" font-size="10.3" font-weight="400" fill="#1c1c1c" text-anchor="start">0 days</text>
<text x="420.2" y="156.7" font-size="10.5" font-weight="400" fill="#1c1c1c" text-anchor="start">1/5/2015</text>
<text x="492.7" y="156.7" font-size="10.5" font-weight="400" fill="#1c1c1c" text-anchor="start">1/5/2015</text>
<text x="35.6" y="172.4" font-size="9.8" font-weight="400" fill="#707070" text-anchor="middle" textLength="5.0" lengthAdjust="spacingAndGlyphs">2</text>
<path d="M52.2 163.59999999999997 h11 v11 h-8 l-3 -3 z" fill="#e3c98a" stroke="none" stroke-width="1"/>
<path d="M52.2 171.59999999999997 h3 v3" fill="none" stroke="#fff6dc" stroke-width="0.9"/>
<rect x="65.90" y="163.80" width="7.20" height="8.10" fill="#fdf8f8" stroke="#6a6a6a" stroke-width="1" rx="1"/>
<rect x="67.80" y="163.30" width="3.80" height="1.60" fill="#222" rx="0.5"/>
<path d="M67.0 168.39999999999998 l1.8 1.7 l2.8 -3.2" fill="none" stroke="#c0392b" stroke-width="1"/>
<rect x="70.50" y="170.10" width="7.40" height="6.30" fill="#d0d0d0" stroke="#555" stroke-width="0.8"/>
<rect x="70.50" y="170.10" width="7.40" height="1.50" fill="#3a4a8a"/>
<line x1="77.90" y1="170.10" x2="77.90" y2="176.40" stroke="#222" stroke-width="1"/>
<path d="M83 166.09999999999997 H93.9 V169.29999999999998 H90.6 V170.89999999999998 H83 Z" fill="#4a7ec4" stroke="none" stroke-width="1"/>
<rect x="90.60" y="169.30" width="3.30" height="1.60" fill="#a9c6ec"/>
<path d="M90.8 172.2 H93.6" fill="none" stroke="#6a6a6a" stroke-width="1.2"/>
<path d="M93.2 170.2 L95.4 172.2 L93.2 174.2 Z" fill="#6a6a6a" stroke="none" stroke-width="1"/>
<text x="137.6" y="173.9" font-size="10.7" font-weight="400" fill="#1c1c1c" text-anchor="start">Project Start</text>
<text x="293.6" y="173.9" font-size="10.3" font-weight="400" fill="#1c1c1c" text-anchor="start">-3 days</text>
<text x="356.6" y="173.9" font-size="10.3" font-weight="400" fill="#1c1c1c" text-anchor="start">0 days</text>
<text x="420.2" y="173.9" font-size="10.5" font-weight="400" fill="#1c1c1c" text-anchor="start">1/6/2015</text>
<text x="492.7" y="173.9" font-size="10.5" font-weight="400" fill="#1c1c1c" text-anchor="start">1/6/2015</text>
<text x="35.6" y="189.6" font-size="9.8" font-weight="400" fill="#707070" text-anchor="middle" textLength="5.0" lengthAdjust="spacingAndGlyphs">3</text>
<path d="M52.2 180.79999999999998 h11 v11 h-8 l-3 -3 z" fill="#e3c98a" stroke="none" stroke-width="1"/>
<path d="M52.2 188.79999999999998 h3 v3" fill="none" stroke="#fff6dc" stroke-width="0.9"/>
<rect x="65.90" y="181.00" width="7.20" height="8.10" fill="#fdf8f8" stroke="#6a6a6a" stroke-width="1" rx="1"/>
<rect x="67.80" y="180.50" width="3.80" height="1.60" fill="#222" rx="0.5"/>
<path d="M67.0 185.6 l1.8 1.7 l2.8 -3.2" fill="none" stroke="#c0392b" stroke-width="1"/>
<rect x="70.50" y="187.30" width="7.40" height="6.30" fill="#d0d0d0" stroke="#555" stroke-width="0.8"/>
<rect x="70.50" y="187.30" width="7.40" height="1.50" fill="#3a4a8a"/>
<line x1="77.90" y1="187.30" x2="77.90" y2="193.60" stroke="#222" stroke-width="1"/>
<path d="M83 183.29999999999998 H93.9 V186.5 H90.6 V188.1 H83 Z" fill="#4a7ec4" stroke="none" stroke-width="1"/>
<rect x="90.60" y="186.50" width="3.30" height="1.60" fill="#a9c6ec"/>
<path d="M90.8 189.4 H93.6" fill="none" stroke="#6a6a6a" stroke-width="1.2"/>
<path d="M93.2 187.4 L95.4 189.4 L93.2 191.4 Z" fill="#6a6a6a" stroke="none" stroke-width="1"/>
<text x="137.6" y="191.1" font-size="10.7" font-weight="400" fill="#1c1c1c" text-anchor="start">Project Management</text>
<text x="293.6" y="191.1" font-size="10.3" font-weight="400" fill="#1c1c1c" text-anchor="start">0 days</text>
<text x="356.6" y="191.1" font-size="10.3" font-weight="400" fill="#1c1c1c" text-anchor="start">59 days</text>
<text x="420.2" y="191.1" font-size="10.5" font-weight="400" fill="#1c1c1c" text-anchor="start">1/7/2015</text>
<text x="492.7" y="191.1" font-size="10.5" font-weight="400" fill="#1c1c1c" text-anchor="start">4/20/2015</text>
<text x="35.6" y="206.8" font-size="9.8" font-weight="400" fill="#707070" text-anchor="middle" textLength="5.0" lengthAdjust="spacingAndGlyphs">4</text>
<rect x="52.00" y="197.80" width="11.30" height="9.10" fill="#6d93d3" rx="1.2"/>
<rect x="53.30" y="200.20" width="2.50" height="1.50" fill="#fafcff"/>
<rect x="53.30" y="202.40" width="2.50" height="1.50" fill="#fafcff"/>
<rect x="53.30" y="204.60" width="2.50" height="1.50" fill="#fafcff"/>
<rect x="56.65" y="200.20" width="2.50" height="1.50" fill="#fafcff"/>
<rect x="56.65" y="202.40" width="2.50" height="1.50" fill="#fafcff"/>
<rect x="56.65" y="204.60" width="2.50" height="1.50" fill="#fafcff"/>
<rect x="60.00" y="200.20" width="2.50" height="1.50" fill="#fafcff"/>
<rect x="60.00" y="202.40" width="2.50" height="1.50" fill="#fafcff"/>
<rect x="60.00" y="204.60" width="2.50" height="1.50" fill="#fafcff"/>
<rect x="53.30" y="202.40" width="9.00" height="1.50" fill="#4a6aa8"/>
<path d="M66.0 197.99999999999997 h11.3 v2.3 h-4.8 v8.1 h-3.5 l-3 -3 z" fill="#e3c98a" stroke="none" stroke-width="1"/>
<path d="M66.6 205.99999999999997 h2.6 v2.4" fill="none" stroke="#f6ecc8" stroke-width="0.8"/>
<rect x="73.00" y="210.80" width="1.10" height="1.10" fill="#777"/>
<rect x="74.50" y="210.80" width="1.10" height="1.10" fill="#333"/>
<rect x="76.00" y="210.80" width="1.10" height="1.10" fill="#777"/>
<path d="M83 200.49999999999997 H93.9 V203.7 H90.6 V205.29999999999998 H83 Z" fill="#4a7ec4" stroke="none" stroke-width="1"/>
<rect x="90.60" y="203.70" width="3.30" height="1.60" fill="#a9c6ec"/>
<path d="M90.8 206.6 H93.6" fill="none" stroke="#6a6a6a" stroke-width="1.2"/>
<path d="M93.2 204.6 L95.4 206.6 L93.2 208.6 Z" fill="#6a6a6a" stroke="none" stroke-width="1"/>
<text x="137.6" y="208.3" font-size="10.7" font-weight="400" fill="#1c1c1c" text-anchor="start">Project Complete</text>
<text x="293.6" y="208.3" font-size="10.3" font-weight="400" fill="#1c1c1c" text-anchor="start">0 days</text>
<text x="356.6" y="208.3" font-size="10.3" font-weight="400" fill="#1c1c1c" text-anchor="start">0 days</text>
<text x="420.2" y="208.3" font-size="10.5" font-weight="400" fill="#1c1c1c" text-anchor="start">4/20/2015</text>
<text x="492.7" y="208.3" font-size="10.5" font-weight="400" fill="#1c1c1c" text-anchor="start">4/20/2015</text>
<text x="35.6" y="224.0" font-size="9.8" font-weight="400" fill="#707070" text-anchor="middle" textLength="5.0" lengthAdjust="spacingAndGlyphs">5</text>
<path d="M52.2 215.2 h11 v11 h-8 l-3 -3 z" fill="#e3c98a" stroke="none" stroke-width="1"/>
<path d="M52.2 223.2 h3 v3" fill="none" stroke="#fff6dc" stroke-width="0.9"/>
<path d="M83 217.7 H93.9 V220.9 H90.6 V222.5 H83 Z" fill="#4a7ec4" stroke="none" stroke-width="1"/>
<rect x="90.60" y="220.90" width="3.30" height="1.60" fill="#a9c6ec"/>
<path d="M90.8 223.8 H93.6" fill="none" stroke="#6a6a6a" stroke-width="1.2"/>
<path d="M93.2 221.8 L95.4 223.8 L93.2 225.8 Z" fill="#6a6a6a" stroke="none" stroke-width="1"/>
<path d="M128.4 224.8 l4.6 -4.6 v4.6 z" fill="#444" stroke="none" stroke-width="1"/>
<text x="137.6" y="225.5" font-size="10.2" font-weight="700" fill="#111" text-anchor="start">Mobilization</text>
<text x="293.6" y="225.5" font-size="10.3" font-weight="700" fill="#111" text-anchor="start">-3 days</text>
<text x="356.6" y="225.5" font-size="10.3" font-weight="700" fill="#111" text-anchor="start">10 days</text>
<text x="420.2" y="225.5" font-size="10.5" font-weight="700" fill="#111" text-anchor="start">1/7/2015</text>
<text x="492.7" y="225.5" font-size="10.5" font-weight="700" fill="#111" text-anchor="start">1/22/2015</text>
<text x="35.6" y="241.2" font-size="9.8" font-weight="400" fill="#707070" text-anchor="middle" textLength="5.0" lengthAdjust="spacingAndGlyphs">6</text>
<path d="M52.2 232.39999999999998 h11 v11 h-8 l-3 -3 z" fill="#e3c98a" stroke="none" stroke-width="1"/>
<path d="M52.2 240.39999999999998 h3 v3" fill="none" stroke="#fff6dc" stroke-width="0.9"/>
<rect x="65.90" y="232.60" width="7.20" height="8.10" fill="#fdf8f8" stroke="#6a6a6a" stroke-width="1" rx="1"/>
<rect x="67.80" y="232.10" width="3.80" height="1.60" fill="#222" rx="0.5"/>
<path d="M67.0 237.2 l1.8 1.7 l2.8 -3.2" fill="none" stroke="#c0392b" stroke-width="1"/>
<rect x="70.50" y="238.90" width="7.40" height="6.30" fill="#d0d0d0" stroke="#555" stroke-width="0.8"/>
<rect x="70.50" y="238.90" width="7.40" height="1.50" fill="#3a4a8a"/>
<line x1="77.90" y1="238.90" x2="77.90" y2="245.20" stroke="#222" stroke-width="1"/>
<path d="M83 234.89999999999998 H93.9 V238.1 H90.6 V239.7 H83 Z" fill="#4a7ec4" stroke="none" stroke-width="1"/>
<rect x="90.60" y="238.10" width="3.30" height="1.60" fill="#a9c6ec"/>
<path d="M90.8 241.0 H93.6" fill="none" stroke="#6a6a6a" stroke-width="1.2"/>
<path d="M93.2 239.0 L95.4 241.0 L93.2 243.0 Z" fill="#6a6a6a" stroke="none" stroke-width="1"/>
<text x="150.2" y="242.7" font-size="10.7" font-weight="400" fill="#1c1c1c" text-anchor="start">Mobilize</text>
<text x="293.6" y="242.7" font-size="10.3" font-weight="400" fill="#1c1c1c" text-anchor="start">-3 days</text>
<text x="356.6" y="242.7" font-size="10.3" font-weight="400" fill="#1c1c1c" text-anchor="start">10 days</text>
<text x="420.2" y="242.7" font-size="10.5" font-weight="400" fill="#1c1c1c" text-anchor="start">1/7/2015</text>
<text x="492.7" y="242.7" font-size="10.5" font-weight="400" fill="#1c1c1c" text-anchor="start">1/22/2015</text>
<text x="35.6" y="258.4" font-size="9.8" font-weight="400" fill="#707070" text-anchor="middle" textLength="5.0" lengthAdjust="spacingAndGlyphs">7</text>
<path d="M52.2 249.59999999999997 h11 v11 h-8 l-3 -3 z" fill="#e3c98a" stroke="none" stroke-width="1"/>
<path d="M52.2 257.59999999999997 h3 v3" fill="none" stroke="#fff6dc" stroke-width="0.9"/>
<path d="M83 252.09999999999997 H93.9 V255.29999999999998 H90.6 V256.9 H83 Z" fill="#4a7ec4" stroke="none" stroke-width="1"/>
<rect x="90.60" y="255.30" width="3.30" height="1.60" fill="#a9c6ec"/>
<path d="M90.8 258.2 H93.6" fill="none" stroke="#6a6a6a" stroke-width="1.2"/>
<path d="M93.2 256.2 L95.4 258.2 L93.2 260.2 Z" fill="#6a6a6a" stroke="none" stroke-width="1"/>
<path d="M128.4 259.2 l4.6 -4.6 v4.6 z" fill="#444" stroke="none" stroke-width="1"/>
<text x="137.6" y="259.9" font-size="10.2" font-weight="700" fill="#111" text-anchor="start">Construction</text>
<text x="293.6" y="259.9" font-size="10.3" font-weight="700" fill="#111" text-anchor="start">-3 days</text>
<text x="356.6" y="259.9" font-size="10.3" font-weight="700" fill="#111" text-anchor="start">34 days</text>
<text x="420.2" y="259.9" font-size="10.5" font-weight="700" fill="#111" text-anchor="start">1/26/2015</text>
<text x="492.7" y="259.9" font-size="10.5" font-weight="700" fill="#111" text-anchor="start">3/24/2015</text>
<text x="35.6" y="275.6" font-size="9.8" font-weight="400" fill="#707070" text-anchor="middle" textLength="5.0" lengthAdjust="spacingAndGlyphs">8</text>
<path d="M52.2 266.79999999999995 h11 v11 h-8 l-3 -3 z" fill="#e3c98a" stroke="none" stroke-width="1"/>
<path d="M52.2 274.79999999999995 h3 v3" fill="none" stroke="#fff6dc" stroke-width="0.9"/>
<path d="M83 269.29999999999995 H93.9 V272.49999999999994 H90.6 V274.09999999999997 H83 Z" fill="#4a7ec4" stroke="none" stroke-width="1"/>
<rect x="90.60" y="272.50" width="3.30" height="1.60" fill="#a9c6ec"/>
<path d="M90.8 275.4 H93.6" fill="none" stroke="#6a6a6a" stroke-width="1.2"/>
<path d="M93.2 273.4 L95.4 275.4 L93.2 277.4 Z" fill="#6a6a6a" stroke="none" stroke-width="1"/>
<path d="M141.0 276.4 l4.6 -4.6 v4.6 z" fill="#444" stroke="none" stroke-width="1"/>
<text x="150.2" y="277.1" font-size="10.2" font-weight="700" fill="#111" text-anchor="start">Below Grade</text>
<text x="293.6" y="277.1" font-size="10.3" font-weight="700" fill="#111" text-anchor="start">-3 days</text>
<text x="356.6" y="277.1" font-size="10.3" font-weight="700" fill="#111" text-anchor="start">13 days</text>
<text x="420.2" y="277.1" font-size="10.5" font-weight="700" fill="#111" text-anchor="start">1/26/2015</text>
<text x="492.7" y="277.1" font-size="10.5" font-weight="700" fill="#111" text-anchor="start">2/16/2015</text>
<text x="35.6" y="292.8" font-size="9.8" font-weight="400" fill="#707070" text-anchor="middle" textLength="5.0" lengthAdjust="spacingAndGlyphs">9</text>
<path d="M52.2 283.99999999999994 h11 v11 h-8 l-3 -3 z" fill="#e3c98a" stroke="none" stroke-width="1"/>
<path d="M52.2 291.99999999999994 h3 v3" fill="none" stroke="#fff6dc" stroke-width="0.9"/>
<rect x="65.90" y="284.20" width="7.20" height="8.10" fill="#fdf8f8" stroke="#6a6a6a" stroke-width="1" rx="1"/>
<rect x="67.80" y="283.70" width="3.80" height="1.60" fill="#222" rx="0.5"/>
<path d="M67.0 288.79999999999995 l1.8 1.7 l2.8 -3.2" fill="none" stroke="#c0392b" stroke-width="1"/>
<rect x="70.50" y="290.50" width="7.40" height="6.30" fill="#d0d0d0" stroke="#555" stroke-width="0.8"/>
<rect x="70.50" y="290.50" width="7.40" height="1.50" fill="#3a4a8a"/>
<line x1="77.90" y1="290.50" x2="77.90" y2="296.80" stroke="#222" stroke-width="1"/>
<path d="M83 286.49999999999994 H93.9 V289.69999999999993 H90.6 V291.29999999999995 H83 Z" fill="#4a7ec4" stroke="none" stroke-width="1"/>
<rect x="90.60" y="289.70" width="3.30" height="1.60" fill="#a9c6ec"/>
<path d="M90.8 292.59999999999997 H93.6" fill="none" stroke="#6a6a6a" stroke-width="1.2"/>
<path d="M93.2 290.59999999999997 L95.4 292.59999999999997 L93.2 294.59999999999997 Z" fill="#6a6a6a" stroke="none" stroke-width="1"/>
<text x="162.8" y="294.3" font-size="10.7" font-weight="400" fill="#1c1c1c" text-anchor="start">Grade Site</text>
<text x="293.6" y="294.3" font-size="10.3" font-weight="400" fill="#1c1c1c" text-anchor="start">-3 days</text>
<text x="356.6" y="294.3" font-size="10.3" font-weight="400" fill="#1c1c1c" text-anchor="start">8 days</text>
<text x="420.2" y="294.3" font-size="10.5" font-weight="400" fill="#1c1c1c" text-anchor="start">1/26/2015</text>
<text x="492.7" y="294.3" font-size="10.5" font-weight="400" fill="#1c1c1c" text-anchor="start">2/5/2015</text>
<text x="35.6" y="310.0" font-size="9.8" font-weight="400" fill="#707070" text-anchor="middle" textLength="9.6" lengthAdjust="spacingAndGlyphs">10</text>
<path d="M52.2 301.2 h11 v11 h-8 l-3 -3 z" fill="#e3c98a" stroke="none" stroke-width="1"/>
<path d="M52.2 309.2 h3 v3" fill="none" stroke="#fff6dc" stroke-width="0.9"/>
<rect x="65.90" y="301.40" width="7.20" height="8.10" fill="#fdf8f8" stroke="#6a6a6a" stroke-width="1" rx="1"/>
<rect x="67.80" y="300.90" width="3.80" height="1.60" fill="#222" rx="0.5"/>
<path d="M67.0 306.0 l1.8 1.7 l2.8 -3.2" fill="none" stroke="#c0392b" stroke-width="1"/>
<rect x="70.50" y="307.70" width="7.40" height="6.30" fill="#d0d0d0" stroke="#555" stroke-width="0.8"/>
<rect x="70.50" y="307.70" width="7.40" height="1.50" fill="#3a4a8a"/>
<line x1="77.90" y1="307.70" x2="77.90" y2="314.00" stroke="#222" stroke-width="1"/>
<path d="M83 303.7 H93.9 V306.9 H90.6 V308.5 H83 Z" fill="#4a7ec4" stroke="none" stroke-width="1"/>
<rect x="90.60" y="306.90" width="3.30" height="1.60" fill="#a9c6ec"/>
<path d="M90.8 309.8 H93.6" fill="none" stroke="#6a6a6a" stroke-width="1.2"/>
<path d="M93.2 307.8 L95.4 309.8 L93.2 311.8 Z" fill="#6a6a6a" stroke="none" stroke-width="1"/>
<text x="162.8" y="311.5" font-size="10.7" font-weight="400" fill="#1c1c1c" text-anchor="start">Set Foundations</text>
<text x="293.6" y="311.5" font-size="10.3" font-weight="400" fill="#1c1c1c" text-anchor="start">0 days</text>
<text x="356.6" y="311.5" font-size="10.3" font-weight="400" fill="#1c1c1c" text-anchor="start">9 days</text>
<text x="420.2" y="311.5" font-size="10.5" font-weight="400" fill="#1c1c1c" text-anchor="start">1/26/2015</text>
<text x="492.7" y="311.5" font-size="10.5" font-weight="400" fill="#1c1c1c" text-anchor="start">2/9/2015</text>
<text x="35.6" y="327.2" font-size="9.8" font-weight="400" fill="#707070" text-anchor="middle" textLength="9.6" lengthAdjust="spacingAndGlyphs">11</text>
<path d="M52.2 318.4 h11 v11 h-8 l-3 -3 z" fill="#e3c98a" stroke="none" stroke-width="1"/>
<path d="M52.2 326.4 h3 v3" fill="none" stroke="#fff6dc" stroke-width="0.9"/>
<rect x="65.90" y="318.60" width="7.20" height="8.10" fill="#fdf8f8" stroke="#6a6a6a" stroke-width="1" rx="1"/>
<rect x="67.80" y="318.10" width="3.80" height="1.60" fill="#222" rx="0.5"/>
<path d="M67.0 323.2 l1.8 1.7 l2.8 -3.2" fill="none" stroke="#c0392b" stroke-width="1"/>
<rect x="70.50" y="324.90" width="7.40" height="6.30" fill="#d0d0d0" stroke="#555" stroke-width="0.8"/>
<rect x="70.50" y="324.90" width="7.40" height="1.50" fill="#3a4a8a"/>
<line x1="77.90" y1="324.90" x2="77.90" y2="331.20" stroke="#222" stroke-width="1"/>
<path d="M83 320.9 H93.9 V324.09999999999997 H90.6 V325.7 H83 Z" fill="#4a7ec4" stroke="none" stroke-width="1"/>
<rect x="90.60" y="324.10" width="3.30" height="1.60" fill="#a9c6ec"/>
<path d="M90.8 327.0 H93.6" fill="none" stroke="#6a6a6a" stroke-width="1.2"/>
<path d="M93.2 325.0 L95.4 327.0 L93.2 329.0 Z" fill="#6a6a6a" stroke="none" stroke-width="1"/>
<text x="162.8" y="328.7" font-size="10.7" font-weight="400" fill="#1c1c1c" text-anchor="start">Install Conduit</text>
<text x="293.6" y="328.7" font-size="10.3" font-weight="400" fill="#1c1c1c" text-anchor="start">-3 days</text>
<text x="356.6" y="328.7" font-size="10.3" font-weight="400" fill="#1c1c1c" text-anchor="start">3 days</text>
<text x="420.2" y="328.7" font-size="10.5" font-weight="400" fill="#1c1c1c" text-anchor="start">2/9/2015</text>
<text x="492.7" y="328.7" font-size="10.5" font-weight="400" fill="#1c1c1c" text-anchor="start">2/11/2015</text>
<text x="35.6" y="344.4" font-size="9.8" font-weight="400" fill="#707070" text-anchor="middle" textLength="9.6" lengthAdjust="spacingAndGlyphs">12</text>
<path d="M52.2 335.59999999999997 h11 v11 h-8 l-3 -3 z" fill="#e3c98a" stroke="none" stroke-width="1"/>
<path d="M52.2 343.59999999999997 h3 v3" fill="none" stroke="#fff6dc" stroke-width="0.9"/>
<rect x="65.90" y="335.80" width="7.20" height="8.10" fill="#fdf8f8" stroke="#6a6a6a" stroke-width="1" rx="1"/>
<rect x="67.80" y="335.30" width="3.80" height="1.60" fill="#222" rx="0.5"/>
<path d="M67.0 340.4 l1.8 1.7 l2.8 -3.2" fill="none" stroke="#c0392b" stroke-width="1"/>
<rect x="70.50" y="342.10" width="7.40" height="6.30" fill="#d0d0d0" stroke="#555" stroke-width="0.8"/>
<rect x="70.50" y="342.10" width="7.40" height="1.50" fill="#3a4a8a"/>
<line x1="77.90" y1="342.10" x2="77.90" y2="348.40" stroke="#222" stroke-width="1"/>
<path d="M83 338.09999999999997 H93.9 V341.29999999999995 H90.6 V342.9 H83 Z" fill="#4a7ec4" stroke="none" stroke-width="1"/>
<rect x="90.60" y="341.30" width="3.30" height="1.60" fill="#a9c6ec"/>
<path d="M90.8 344.2 H93.6" fill="none" stroke="#6a6a6a" stroke-width="1.2"/>
<path d="M93.2 342.2 L95.4 344.2 L93.2 346.2 Z" fill="#6a6a6a" stroke="none" stroke-width="1"/>
<text x="162.8" y="345.9" font-size="10.7" font-weight="400" fill="#1c1c1c" text-anchor="start">Dig Cable Trench</text>
<text x="293.6" y="345.9" font-size="10.3" font-weight="400" fill="#1c1c1c" text-anchor="start">0 days</text>
<text x="356.6" y="345.9" font-size="10.3" font-weight="400" fill="#1c1c1c" text-anchor="start">4 days</text>
<text x="420.2" y="345.9" font-size="10.5" font-weight="400" fill="#1c1c1c" text-anchor="start">2/10/2015</text>
<text x="492.7" y="345.9" font-size="10.5" font-weight="400" fill="#1c1c1c" text-anchor="start">2/16/2015</text>
<text x="35.6" y="361.6" font-size="9.8" font-weight="400" fill="#707070" text-anchor="middle" textLength="9.6" lengthAdjust="spacingAndGlyphs">13</text>
<path d="M52.2 352.79999999999995 h11 v11 h-8 l-3 -3 z" fill="#e3c98a" stroke="none" stroke-width="1"/>
<path d="M52.2 360.79999999999995 h3 v3" fill="none" stroke="#fff6dc" stroke-width="0.9"/>
<path d="M83 355.29999999999995 H93.9 V358.49999999999994 H90.6 V360.09999999999997 H83 Z" fill="#4a7ec4" stroke="none" stroke-width="1"/>
<rect x="90.60" y="358.50" width="3.30" height="1.60" fill="#a9c6ec"/>
<path d="M90.8 361.4 H93.6" fill="none" stroke="#6a6a6a" stroke-width="1.2"/>
<path d="M93.2 359.4 L95.4 361.4 L93.2 363.4 Z" fill="#6a6a6a" stroke="none" stroke-width="1"/>
<path d="M141.0 362.4 l4.6 -4.6 v4.6 z" fill="#444" stroke="none" stroke-width="1"/>
<text x="150.2" y="363.1" font-size="10.2" font-weight="700" fill="#111" text-anchor="start">Above Grade</text>
<text x="293.6" y="363.1" font-size="10.3" font-weight="700" fill="#111" text-anchor="start">-3 days</text>
<text x="356.6" y="363.1" font-size="10.3" font-weight="700" fill="#111" text-anchor="start">23 days</text>
<text x="420.2" y="363.1" font-size="10.5" font-weight="700" fill="#111" text-anchor="start">2/12/2015</text>
<text x="492.7" y="363.1" font-size="10.5" font-weight="700" fill="#111" text-anchor="start">3/24/2015</text>
<text x="35.6" y="378.8" font-size="9.8" font-weight="400" fill="#707070" text-anchor="middle" textLength="9.6" lengthAdjust="spacingAndGlyphs">14</text>
<rect x="52.00" y="369.80" width="11.30" height="9.10" fill="#6d93d3" rx="1.2"/>
<rect x="53.30" y="372.20" width="2.50" height="1.50" fill="#fafcff"/>
<rect x="53.30" y="374.40" width="2.50" height="1.50" fill="#fafcff"/>
<rect x="53.30" y="376.60" width="2.50" height="1.50" fill="#fafcff"/>
<rect x="56.65" y="372.20" width="2.50" height="1.50" fill="#fafcff"/>
<rect x="56.65" y="374.40" width="2.50" height="1.50" fill="#fafcff"/>
<rect x="56.65" y="376.60" width="2.50" height="1.50" fill="#fafcff"/>
<rect x="60.00" y="372.20" width="2.50" height="1.50" fill="#fafcff"/>
<rect x="60.00" y="374.40" width="2.50" height="1.50" fill="#fafcff"/>
<rect x="60.00" y="376.60" width="2.50" height="1.50" fill="#fafcff"/>
<rect x="54.20" y="372.80" width="4.40" height="4.40" fill="#d23a3a"/>
<path d="M59.2 373.59999999999997 L63.6 381.99999999999994 H54.8 Z" fill="#f2dc4a" stroke="#c8a820" stroke-width="0.5"/>
<line x1="59.20" y1="376.60" x2="59.20" y2="379.40" stroke="#333" stroke-width="1"/>
<path d="M66.0 369.99999999999994 h11.3 v2.3 h-4.8 v8.1 h-3.5 l-3 -3 z" fill="#e3c98a" stroke="none" stroke-width="1"/>
<path d="M66.6 377.99999999999994 h2.6 v2.4" fill="none" stroke="#f6ecc8" stroke-width="0.8"/>
<rect x="73.00" y="382.80" width="1.10" height="1.10" fill="#777"/>
<rect x="74.50" y="382.80" width="1.10" height="1.10" fill="#333"/>
<rect x="76.00" y="382.80" width="1.10" height="1.10" fill="#777"/>
<path d="M83 372.49999999999994 H93.9 V375.69999999999993 H90.6 V377.29999999999995 H83 Z" fill="#4a7ec4" stroke="none" stroke-width="1"/>
<rect x="90.60" y="375.70" width="3.30" height="1.60" fill="#a9c6ec"/>
<path d="M90.8 378.59999999999997 H93.6" fill="none" stroke="#6a6a6a" stroke-width="1.2"/>
<path d="M93.2 376.59999999999997 L95.4 378.59999999999997 L93.2 380.59999999999997 Z" fill="#6a6a6a" stroke="none" stroke-width="1"/>
<text x="162.8" y="380.3" font-size="10.7" font-weight="400" fill="#1c1c1c" text-anchor="start">Erect Steel Structures</text>
<text x="293.6" y="380.3" font-size="10.3" font-weight="400" fill="#1c1c1c" text-anchor="start">-3 days</text>
<text x="356.6" y="380.3" font-size="10.3" font-weight="400" fill="#1c1c1c" text-anchor="start">8 days</text>
<text x="420.2" y="380.3" font-size="10.5" font-weight="400" fill="#1c1c1c" text-anchor="start">2/12/2015</text>
<text x="492.7" y="380.3" font-size="10.5" font-weight="400" fill="#1c1c1c" text-anchor="start">2/25/2015</text>
<text x="35.6" y="396.0" font-size="9.8" font-weight="400" fill="#707070" text-anchor="middle" textLength="9.6" lengthAdjust="spacingAndGlyphs">15</text>
<path d="M52.2 387.2 h11 v11 h-8 l-3 -3 z" fill="#e3c98a" stroke="none" stroke-width="1"/>
<path d="M52.2 395.2 h3 v3" fill="none" stroke="#fff6dc" stroke-width="0.9"/>
<rect x="65.90" y="387.40" width="7.20" height="8.10" fill="#fdf8f8" stroke="#6a6a6a" stroke-width="1" rx="1"/>
<rect x="67.80" y="386.90" width="3.80" height="1.60" fill="#222" rx="0.5"/>
<path d="M67.0 392.0 l1.8 1.7 l2.8 -3.2" fill="none" stroke="#c0392b" stroke-width="1"/>
<rect x="70.50" y="393.70" width="7.40" height="6.30" fill="#d0d0d0" stroke="#555" stroke-width="0.8"/>
<rect x="70.50" y="393.70" width="7.40" height="1.50" fill="#3a4a8a"/>
<line x1="77.90" y1="393.70" x2="77.90" y2="400.00" stroke="#222" stroke-width="1"/>
<path d="M83 389.7 H93.9 V392.9 H90.6 V394.5 H83 Z" fill="#4a7ec4" stroke="none" stroke-width="1"/>
<rect x="90.60" y="392.90" width="3.30" height="1.60" fill="#a9c6ec"/>
<path d="M90.8 395.8 H93.6" fill="none" stroke="#6a6a6a" stroke-width="1.2"/>
<path d="M93.2 393.8 L95.4 395.8 L93.2 397.8 Z" fill="#6a6a6a" stroke="none" stroke-width="1"/>
<text x="162.8" y="397.5" font-size="10.7" font-weight="400" fill="#1c1c1c" text-anchor="start">Install Equipment</text>
<text x="293.6" y="397.5" font-size="10.3" font-weight="400" fill="#1c1c1c" text-anchor="start">0 days</text>
<text x="356.6" y="397.5" font-size="10.3" font-weight="400" fill="#1c1c1c" text-anchor="start">6 days</text>
<text x="420.2" y="397.5" font-size="10.5" font-weight="400" fill="#1c1c1c" text-anchor="start">2/17/2015</text>
<text x="492.7" y="397.5" font-size="10.5" font-weight="400" fill="#1c1c1c" text-anchor="start">2/25/2015</text>
<text x="35.6" y="413.2" font-size="9.8" font-weight="400" fill="#707070" text-anchor="middle" textLength="9.6" lengthAdjust="spacingAndGlyphs">16</text>
<path d="M52.2 404.4 h11 v11 h-8 l-3 -3 z" fill="#e3c98a" stroke="none" stroke-width="1"/>
<path d="M52.2 412.4 h3 v3" fill="none" stroke="#fff6dc" stroke-width="0.9"/>
<rect x="65.90" y="404.60" width="7.20" height="8.10" fill="#fdf8f8" stroke="#6a6a6a" stroke-width="1" rx="1"/>
<rect x="67.80" y="404.10" width="3.80" height="1.60" fill="#222" rx="0.5"/>
<path d="M67.0 409.2 l1.8 1.7 l2.8 -3.2" fill="none" stroke="#c0392b" stroke-width="1"/>
<rect x="70.50" y="410.90" width="7.40" height="6.30" fill="#d0d0d0" stroke="#555" stroke-width="0.8"/>
<rect x="70.50" y="410.90" width="7.40" height="1.50" fill="#3a4a8a"/>
<line x1="77.90" y1="410.90" x2="77.90" y2="417.20" stroke="#222" stroke-width="1"/>
<path d="M83 406.9 H93.9 V410.09999999999997 H90.6 V411.7 H83 Z" fill="#4a7ec4" stroke="none" stroke-width="1"/>
<rect x="90.60" y="410.10" width="3.30" height="1.60" fill="#a9c6ec"/>
<path d="M90.8 413.0 H93.6" fill="none" stroke="#6a6a6a" stroke-width="1.2"/>
<path d="M93.2 411.0 L95.4 413.0 L93.2 415.0 Z" fill="#6a6a6a" stroke="none" stroke-width="1"/>
<text x="162.8" y="414.7" font-size="10.7" font-weight="400" fill="#1c1c1c" text-anchor="start">Install Grounding</text>
<text x="293.6" y="414.7" font-size="10.3" font-weight="400" fill="#1c1c1c" text-anchor="start">18 days</text>
<text x="356.6" y="414.7" font-size="10.3" font-weight="400" fill="#1c1c1c" text-anchor="start">2 days</text>
<text x="420.2" y="414.7" font-size="10.5" font-weight="400" fill="#1c1c1c" text-anchor="start">2/26/2015</text>
<text x="492.7" y="414.7" font-size="10.5" font-weight="400" fill="#1c1c1c" text-anchor="start">3/2/2015</text>
<text x="35.6" y="430.4" font-size="9.8" font-weight="400" fill="#707070" text-anchor="middle" textLength="9.6" lengthAdjust="spacingAndGlyphs">17</text>
<path d="M52.2 421.59999999999997 h11 v11 h-8 l-3 -3 z" fill="#e3c98a" stroke="none" stroke-width="1"/>
<path d="M52.2 429.59999999999997 h3 v3" fill="none" stroke="#fff6dc" stroke-width="0.9"/>
<rect x="65.90" y="421.80" width="7.20" height="8.10" fill="#fdf8f8" stroke="#6a6a6a" stroke-width="1" rx="1"/>
<rect x="67.80" y="421.30" width="3.80" height="1.60" fill="#222" rx="0.5"/>
<path d="M67.0 426.4 l1.8 1.7 l2.8 -3.2" fill="none" stroke="#c0392b" stroke-width="1"/>
<rect x="70.50" y="428.10" width="7.40" height="6.30" fill="#d0d0d0" stroke="#555" stroke-width="0.8"/>
<rect x="70.50" y="428.10" width="7.40" height="1.50" fill="#3a4a8a"/>
<line x1="77.90" y1="428.10" x2="77.90" y2="434.40" stroke="#222" stroke-width="1"/>
<path d="M83 424.09999999999997 H93.9 V427.29999999999995 H90.6 V428.9 H83 Z" fill="#4a7ec4" stroke="none" stroke-width="1"/>
<rect x="90.60" y="427.30" width="3.30" height="1.60" fill="#a9c6ec"/>
<path d="M90.8 430.2 H93.6" fill="none" stroke="#6a6a6a" stroke-width="1.2"/>
<path d="M93.2 428.2 L95.4 430.2 L93.2 432.2 Z" fill="#6a6a6a" stroke="none" stroke-width="1"/>
<text x="162.8" y="431.9" font-size="10.7" font-weight="400" fill="#1c1c1c" text-anchor="start">Install Bus and Jumpers</text>
<text x="293.6" y="431.9" font-size="10.3" font-weight="400" fill="#1c1c1c" text-anchor="start">12 days</text>
<text x="356.6" y="431.9" font-size="10.3" font-weight="400" fill="#1c1c1c" text-anchor="start">8 days</text>
<text x="420.2" y="431.9" font-size="10.5" font-weight="400" fill="#1c1c1c" text-anchor="start">2/26/2015</text>
<text x="492.7" y="431.9" font-size="10.5" font-weight="400" fill="#1c1c1c" text-anchor="start">3/11/2015</text>
<text x="35.6" y="447.6" font-size="9.8" font-weight="400" fill="#707070" text-anchor="middle" textLength="9.6" lengthAdjust="spacingAndGlyphs">18</text>
<path d="M52.2 438.79999999999995 h11 v11 h-8 l-3 -3 z" fill="#e3c98a" stroke="none" stroke-width="1"/>
<path d="M52.2 446.79999999999995 h3 v3" fill="none" stroke="#fff6dc" stroke-width="0.9"/>
<rect x="65.90" y="439.00" width="7.20" height="8.10" fill="#fdf8f8" stroke="#6a6a6a" stroke-width="1" rx="1"/>
<rect x="67.80" y="438.50" width="3.80" height="1.60" fill="#222" rx="0.5"/>
<path d="M67.0 443.59999999999997 l1.8 1.7 l2.8 -3.2" fill="none" stroke="#c0392b" stroke-width="1"/>
<rect x="70.50" y="445.30" width="7.40" height="6.30" fill="#d0d0d0" stroke="#555" stroke-width="0.8"/>
<rect x="70.50" y="445.30" width="7.40" height="1.50" fill="#3a4a8a"/>
<line x1="77.90" y1="445.30" x2="77.90" y2="451.60" stroke="#222" stroke-width="1"/>
<path d="M83 441.29999999999995 H93.9 V444.49999999999994 H90.6 V446.09999999999997 H83 Z" fill="#4a7ec4" stroke="none" stroke-width="1"/>
<rect x="90.60" y="444.50" width="3.30" height="1.60" fill="#a9c6ec"/>
<path d="M90.8 447.4 H93.6" fill="none" stroke="#6a6a6a" stroke-width="1.2"/>
<path d="M93.2 445.4 L95.4 447.4 L93.2 449.4 Z" fill="#6a6a6a" stroke="none" stroke-width="1"/>
<text x="162.8" y="449.1" font-size="10.7" font-weight="400" fill="#1c1c1c" text-anchor="start">Lay Control Cable</text>
<text x="293.6" y="449.1" font-size="10.3" font-weight="400" fill="#1c1c1c" text-anchor="start">0 days</text>
<text x="356.6" y="449.1" font-size="10.3" font-weight="400" fill="#1c1c1c" text-anchor="start">12 days</text>
<text x="420.2" y="449.1" font-size="10.5" font-weight="400" fill="#1c1c1c" text-anchor="start">3/4/2015</text>
<text x="492.7" y="449.1" font-size="10.5" font-weight="400" fill="#1c1c1c" text-anchor="start">3/24/2015</text>
<text x="35.6" y="464.8" font-size="9.8" font-weight="400" fill="#707070" text-anchor="middle" textLength="9.6" lengthAdjust="spacingAndGlyphs">19</text>
<path d="M52.2 455.99999999999994 h11 v11 h-8 l-3 -3 z" fill="#e3c98a" stroke="none" stroke-width="1"/>
<path d="M52.2 463.99999999999994 h3 v3" fill="none" stroke="#fff6dc" stroke-width="0.9"/>
<path d="M83 458.49999999999994 H93.9 V461.69999999999993 H90.6 V463.29999999999995 H83 Z" fill="#4a7ec4" stroke="none" stroke-width="1"/>
<rect x="90.60" y="461.70" width="3.30" height="1.60" fill="#a9c6ec"/>
<path d="M90.8 464.59999999999997 H93.6" fill="none" stroke="#6a6a6a" stroke-width="1.2"/>
<path d="M93.2 462.59999999999997 L95.4 464.59999999999997 L93.2 466.59999999999997 Z" fill="#6a6a6a" stroke="none" stroke-width="1"/>
<path d="M141.0 465.6 l4.6 -4.6 v4.6 z" fill="#444" stroke="none" stroke-width="1"/>
<text x="150.2" y="466.3" font-size="10.2" font-weight="700" fill="#111" text-anchor="start">Fence</text>
<text x="293.6" y="466.3" font-size="10.3" font-weight="700" fill="#111" text-anchor="start">4 days</text>
<text x="356.6" y="466.3" font-size="10.3" font-weight="700" fill="#111" text-anchor="start">7 days</text>
<text x="420.2" y="466.3" font-size="10.5" font-weight="700" fill="#111" text-anchor="start">2/9/2015</text>
<text x="492.7" y="466.3" font-size="10.5" font-weight="700" fill="#111" text-anchor="start">2/18/2015</text>
<text x="35.6" y="482.0" font-size="9.8" font-weight="400" fill="#707070" text-anchor="middle" textLength="9.6" lengthAdjust="spacingAndGlyphs">20</text>
<rect x="52.00" y="473.00" width="11.30" height="9.10" fill="#6d93d3" rx="1.2"/>
<rect x="53.30" y="475.40" width="2.50" height="1.50" fill="#fafcff"/>
<rect x="53.30" y="477.60" width="2.50" height="1.50" fill="#fafcff"/>
<rect x="53.30" y="479.80" width="2.50" height="1.50" fill="#fafcff"/>
<rect x="56.65" y="475.40" width="2.50" height="1.50" fill="#fafcff"/>
<rect x="56.65" y="477.60" width="2.50" height="1.50" fill="#fafcff"/>
<rect x="56.65" y="479.80" width="2.50" height="1.50" fill="#fafcff"/>
<rect x="60.00" y="475.40" width="2.50" height="1.50" fill="#fafcff"/>
<rect x="60.00" y="477.60" width="2.50" height="1.50" fill="#fafcff"/>
<rect x="60.00" y="479.80" width="2.50" height="1.50" fill="#fafcff"/>
<rect x="54.20" y="476.00" width="4.40" height="4.40" fill="#d23a3a"/>
<path d="M66.0 473.2 h11.3 v2.3 h-4.8 v8.1 h-3.5 l-3 -3 z" fill="#e3c98a" stroke="none" stroke-width="1"/>
<path d="M66.6 481.2 h2.6 v2.4" fill="none" stroke="#f6ecc8" stroke-width="0.8"/>
<rect x="73.00" y="486.00" width="1.10" height="1.10" fill="#777"/>
<rect x="74.50" y="486.00" width="1.10" height="1.10" fill="#333"/>
<rect x="76.00" y="486.00" width="1.10" height="1.10" fill="#777"/>
<path d="M83 475.7 H93.9 V478.9 H90.6 V480.5 H83 Z" fill="#4a7ec4" stroke="none" stroke-width="1"/>
<rect x="90.60" y="478.90" width="3.30" height="1.60" fill="#a9c6ec"/>
<path d="M90.8 481.8 H93.6" fill="none" stroke="#6a6a6a" stroke-width="1.2"/>
<path d="M93.2 479.8 L95.4 481.8 L93.2 483.8 Z" fill="#6a6a6a" stroke="none" stroke-width="1"/>
<text x="162.8" y="483.5" font-size="10.7" font-weight="400" fill="#1c1c1c" text-anchor="start">Install Fence</text>
<text x="293.6" y="483.5" font-size="10.3" font-weight="400" fill="#1c1c1c" text-anchor="start">4 days</text>
<text x="356.6" y="483.5" font-size="10.3" font-weight="400" fill="#1c1c1c" text-anchor="start">7 days</text>
<text x="420.2" y="483.5" font-size="10.5" font-weight="400" fill="#1c1c1c" text-anchor="start">2/9/2015</text>
<text x="492.7" y="483.5" font-size="10.5" font-weight="400" fill="#1c1c1c" text-anchor="start">2/18/2015</text>
<text x="35.6" y="499.2" font-size="9.8" font-weight="400" fill="#707070" text-anchor="middle" textLength="9.6" lengthAdjust="spacingAndGlyphs">21</text>
<path d="M52.2 490.4 h11 v11 h-8 l-3 -3 z" fill="#e3c98a" stroke="none" stroke-width="1"/>
<path d="M52.2 498.4 h3 v3" fill="none" stroke="#fff6dc" stroke-width="0.9"/>
<path d="M83 492.9 H93.9 V496.09999999999997 H90.6 V497.7 H83 Z" fill="#4a7ec4" stroke="none" stroke-width="1"/>
<rect x="90.60" y="496.10" width="3.30" height="1.60" fill="#a9c6ec"/>
<path d="M90.8 499.0 H93.6" fill="none" stroke="#6a6a6a" stroke-width="1.2"/>
<path d="M93.2 497.0 L95.4 499.0 L93.2 501.0 Z" fill="#6a6a6a" stroke="none" stroke-width="1"/>
<path d="M128.4 500.0 l4.6 -4.6 v4.6 z" fill="#444" stroke="none" stroke-width="1"/>
<text x="137.6" y="500.7" font-size="10.2" font-weight="700" fill="#111" text-anchor="start">Site Restoration</text>
<text x="293.6" y="500.7" font-size="10.3" font-weight="700" fill="#111" text-anchor="start">0 days</text>
<text x="356.6" y="500.7" font-size="10.3" font-weight="700" fill="#111" text-anchor="start">26 days</text>
<text x="420.2" y="500.7" font-size="10.5" font-weight="700" fill="#111" text-anchor="start">2/17/2015</text>
<text x="492.7" y="500.7" font-size="10.5" font-weight="700" fill="#111" text-anchor="start">4/1/2015</text>
<text x="35.6" y="516.4" font-size="9.8" font-weight="400" fill="#707070" text-anchor="middle" textLength="9.6" lengthAdjust="spacingAndGlyphs">22</text>
<path d="M52.2 507.59999999999997 h11 v11 h-8 l-3 -3 z" fill="#e3c98a" stroke="none" stroke-width="1"/>
<path d="M52.2 515.5999999999999 h3 v3" fill="none" stroke="#fff6dc" stroke-width="0.9"/>
<rect x="65.90" y="507.80" width="7.20" height="8.10" fill="#fdf8f8" stroke="#6a6a6a" stroke-width="1" rx="1"/>
<rect x="67.80" y="507.30" width="3.80" height="1.60" fill="#222" rx="0.5"/>
<path d="M67.0 512.4 l1.8 1.7 l2.8 -3.2" fill="none" stroke="#c0392b" stroke-width="1"/>
<rect x="70.50" y="514.10" width="7.40" height="6.30" fill="#d0d0d0" stroke="#555" stroke-width="0.8"/>
<rect x="70.50" y="514.10" width="7.40" height="1.50" fill="#3a4a8a"/>
<line x1="77.90" y1="514.10" x2="77.90" y2="520.40" stroke="#222" stroke-width="1"/>
<path d="M83 510.09999999999997 H93.9 V513.3 H90.6 V514.9 H83 Z" fill="#4a7ec4" stroke="none" stroke-width="1"/>
<rect x="90.60" y="513.30" width="3.30" height="1.60" fill="#a9c6ec"/>
<path d="M90.8 516.1999999999999 H93.6" fill="none" stroke="#6a6a6a" stroke-width="1.2"/>
<path d="M93.2 514.1999999999999 L95.4 516.1999999999999 L93.2 518.1999999999999 Z" fill="#6a6a6a" stroke="none" stroke-width="1"/>
<text x="150.2" y="517.9" font-size="10.7" font-weight="400" fill="#1c1c1c" text-anchor="start">Remove Equipment</text>
<text x="293.6" y="517.9" font-size="10.3" font-weight="400" fill="#1c1c1c" text-anchor="start">0 days</text>
<text x="356.6" y="517.9" font-size="10.3" font-weight="400" fill="#1c1c1c" text-anchor="start">5 days</text>
<text x="420.2" y="517.9" font-size="10.5" font-weight="400" fill="#1c1c1c" text-anchor="start">3/25/2015</text>
<text x="492.7" y="517.9" font-size="10.5" font-weight="400" fill="#1c1c1c" text-anchor="start">4/1/2015</text>
<text x="35.6" y="533.6" font-size="9.8" font-weight="400" fill="#707070" text-anchor="middle" textLength="9.6" lengthAdjust="spacingAndGlyphs">23</text>
<path d="M52.2 524.8 h11 v11 h-8 l-3 -3 z" fill="#e3c98a" stroke="none" stroke-width="1"/>
<path d="M52.2 532.8 h3 v3" fill="none" stroke="#fff6dc" stroke-width="0.9"/>
<rect x="65.90" y="525.00" width="7.20" height="8.10" fill="#fdf8f8" stroke="#6a6a6a" stroke-width="1" rx="1"/>
<rect x="67.80" y="524.50" width="3.80" height="1.60" fill="#222" rx="0.5"/>
<path d="M67.0 529.5999999999999 l1.8 1.7 l2.8 -3.2" fill="none" stroke="#c0392b" stroke-width="1"/>
<rect x="70.50" y="531.30" width="7.40" height="6.30" fill="#d0d0d0" stroke="#555" stroke-width="0.8"/>
<rect x="70.50" y="531.30" width="7.40" height="1.50" fill="#3a4a8a"/>
<line x1="77.90" y1="531.30" x2="77.90" y2="537.60" stroke="#222" stroke-width="1"/>
<path d="M83 527.3 H93.9 V530.4999999999999 H90.6 V532.0999999999999 H83 Z" fill="#4a7ec4" stroke="none" stroke-width="1"/>
<rect x="90.60" y="530.50" width="3.30" height="1.60" fill="#a9c6ec"/>
<path d="M90.8 533.3999999999999 H93.6" fill="none" stroke="#6a6a6a" stroke-width="1.2"/>
<path d="M93.2 531.3999999999999 L95.4 533.3999999999999 L93.2 535.3999999999999 Z" fill="#6a6a6a" stroke="none" stroke-width="1"/>
<text x="150.2" y="535.1" font-size="10.7" font-weight="400" fill="#1c1c1c" text-anchor="start">Lay Stoning</text>
<text x="293.6" y="535.1" font-size="10.3" font-weight="400" fill="#1c1c1c" text-anchor="start">24 days</text>
<text x="356.6" y="535.1" font-size="10.3" font-weight="400" fill="#1c1c1c" text-anchor="start">5 days</text>
<text x="420.2" y="535.1" font-size="10.5" font-weight="400" fill="#1c1c1c" text-anchor="start">2/17/2015</text>
<text x="492.7" y="535.1" font-size="10.5" font-weight="400" fill="#1c1c1c" text-anchor="start">2/18/2015</text>
<text x="35.6" y="550.8" font-size="9.8" font-weight="400" fill="#707070" text-anchor="middle" textLength="9.6" lengthAdjust="spacingAndGlyphs">24</text>
<path d="M52.2 542.0 h11 v11 h-8 l-3 -3 z" fill="#e3c98a" stroke="none" stroke-width="1"/>
<path d="M52.2 550.0 h3 v3" fill="none" stroke="#fff6dc" stroke-width="0.9"/>
<rect x="65.90" y="542.20" width="7.20" height="8.10" fill="#fdf8f8" stroke="#6a6a6a" stroke-width="1" rx="1"/>
<rect x="67.80" y="541.70" width="3.80" height="1.60" fill="#222" rx="0.5"/>
<path d="M67.0 546.8 l1.8 1.7 l2.8 -3.2" fill="none" stroke="#c0392b" stroke-width="1"/>
<rect x="70.50" y="548.50" width="7.40" height="6.30" fill="#d0d0d0" stroke="#555" stroke-width="0.8"/>
<rect x="70.50" y="548.50" width="7.40" height="1.50" fill="#3a4a8a"/>
<line x1="77.90" y1="548.50" x2="77.90" y2="554.80" stroke="#222" stroke-width="1"/>
<path d="M83 544.5 H93.9 V547.6999999999999 H90.6 V549.3 H83 Z" fill="#4a7ec4" stroke="none" stroke-width="1"/>
<rect x="90.60" y="547.70" width="3.30" height="1.60" fill="#a9c6ec"/>
<path d="M90.8 550.5999999999999 H93.6" fill="none" stroke="#6a6a6a" stroke-width="1.2"/>
<path d="M93.2 548.5999999999999 L95.4 550.5999999999999 L93.2 552.5999999999999 Z" fill="#6a6a6a" stroke="none" stroke-width="1"/>
<text x="150.2" y="552.3" font-size="10.7" font-weight="400" fill="#1c1c1c" text-anchor="start">Lay Roadway</text>
<text x="293.6" y="552.3" font-size="10.3" font-weight="400" fill="#1c1c1c" text-anchor="start">22 days</text>
<text x="356.6" y="552.3" font-size="10.3" font-weight="400" fill="#1c1c1c" text-anchor="start">4 days</text>
<text x="420.2" y="552.3" font-size="10.5" font-weight="400" fill="#1c1c1c" text-anchor="start">2/17/2015</text>
<text x="492.7" y="552.3" font-size="10.5" font-weight="400" fill="#1c1c1c" text-anchor="start">2/23/2015</text>
<text x="35.6" y="568.0" font-size="9.8" font-weight="400" fill="#707070" text-anchor="middle" textLength="9.6" lengthAdjust="spacingAndGlyphs">25</text>
<path d="M52.2 559.2 h11 v11 h-8 l-3 -3 z" fill="#e3c98a" stroke="none" stroke-width="1"/>
<path d="M52.2 567.2 h3 v3" fill="none" stroke="#fff6dc" stroke-width="0.9"/>
<path d="M83 561.7 H93.9 V564.9 H90.6 V566.5 H83 Z" fill="#4a7ec4" stroke="none" stroke-width="1"/>
<rect x="90.60" y="564.90" width="3.30" height="1.60" fill="#a9c6ec"/>
<path d="M90.8 567.8 H93.6" fill="none" stroke="#6a6a6a" stroke-width="1.2"/>
<path d="M93.2 565.8 L95.4 567.8 L93.2 569.8 Z" fill="#6a6a6a" stroke="none" stroke-width="1"/>
<path d="M128.4 568.8 l4.6 -4.6 v4.6 z" fill="#444" stroke="none" stroke-width="1"/>
<text x="137.6" y="569.5" font-size="10.2" font-weight="700" fill="#111" text-anchor="start">Project Closeout</text>
<text x="293.6" y="569.5" font-size="10.3" font-weight="700" fill="#111" text-anchor="start">0 days</text>
<text x="356.6" y="569.5" font-size="10.3" font-weight="700" fill="#111" text-anchor="start">10 days</text>
<text x="420.2" y="569.5" font-size="10.5" font-weight="700" fill="#111" text-anchor="start">4/2/2015</text>
<text x="492.7" y="569.5" font-size="10.5" font-weight="700" fill="#111" text-anchor="start">4/20/2015</text>
<text x="35.6" y="585.2" font-size="9.8" font-weight="400" fill="#707070" text-anchor="middle" textLength="9.6" lengthAdjust="spacingAndGlyphs">26</text>
<path d="M52.2 576.4000000000001 h11 v11 h-8 l-3 -3 z" fill="#e3c98a" stroke="none" stroke-width="1"/>
<path d="M52.2 584.4000000000001 h3 v3" fill="none" stroke="#fff6dc" stroke-width="0.9"/>
<rect x="65.90" y="576.60" width="7.20" height="8.10" fill="#fdf8f8" stroke="#6a6a6a" stroke-width="1" rx="1"/>
<rect x="67.80" y="576.10" width="3.80" height="1.60" fill="#222" rx="0.5"/>
<path d="M67.0 581.2 l1.8 1.7 l2.8 -3.2" fill="none" stroke="#c0392b" stroke-width="1"/>
<rect x="70.50" y="582.90" width="7.40" height="6.30" fill="#d0d0d0" stroke="#555" stroke-width="0.8"/>
<rect x="70.50" y="582.90" width="7.40" height="1.50" fill="#3a4a8a"/>
<line x1="77.90" y1="582.90" x2="77.90" y2="589.20" stroke="#222" stroke-width="1"/>
<path d="M83 578.9000000000001 H93.9 V582.1 H90.6 V583.7 H83 Z" fill="#4a7ec4" stroke="none" stroke-width="1"/>
<rect x="90.60" y="582.10" width="3.30" height="1.60" fill="#a9c6ec"/>
<path d="M90.8 585.0 H93.6" fill="none" stroke="#6a6a6a" stroke-width="1.2"/>
<path d="M93.2 583.0 L95.4 585.0 L93.2 587.0 Z" fill="#6a6a6a" stroke="none" stroke-width="1"/>
<text x="150.2" y="586.7" font-size="10.7" font-weight="400" fill="#1c1c1c" text-anchor="start">Substaintial Completion</text>
<text x="293.6" y="586.7" font-size="10.3" font-weight="400" fill="#1c1c1c" text-anchor="start">0 days</text>
<text x="356.6" y="586.7" font-size="10.3" font-weight="400" fill="#1c1c1c" text-anchor="start">10 days</text>
<text x="420.2" y="586.7" font-size="10.5" font-weight="400" fill="#1c1c1c" text-anchor="start">4/2/2015</text>
<text x="492.7" y="586.7" font-size="10.5" font-weight="400" fill="#1c1c1c" text-anchor="start">4/20/2015</text>
<rect x="292.3" y="113.4" width="62.4" height="488.4" rx="19" ry="19" fill="none" stroke="#000" stroke-opacity="0.08" stroke-width="2"/>
<rect x="291.3" y="111.6" width="63.4" height="488.4" rx="19" ry="19" fill="none" stroke="#cf6a5f" stroke-width="2"/>
<line x1="582.10" y1="116.00" x2="582.10" y2="128.00" stroke="#e0e0e0" stroke-width="1"/>
<text x="586.7" y="126.1" font-size="9" font-weight="400" fill="#7a7a7a" text-anchor="start">January</text>
<line x1="713.70" y1="116.00" x2="713.70" y2="128.00" stroke="#e0e0e0" stroke-width="1"/>
<text x="718.3" y="126.1" font-size="9" font-weight="400" fill="#7a7a7a" text-anchor="start">February</text>
<line x1="832.60" y1="116.00" x2="832.60" y2="128.00" stroke="#e0e0e0" stroke-width="1"/>
<text x="837.2" y="126.1" font-size="9" font-weight="400" fill="#7a7a7a" text-anchor="start">March</text>
<line x1="963.60" y1="116.00" x2="963.60" y2="128.00" stroke="#e0e0e0" stroke-width="1"/>
<text x="968.2" y="126.1" font-size="9" font-weight="400" fill="#7a7a7a" text-anchor="start">April</text>
<line x1="1091.20" y1="116.00" x2="1091.20" y2="128.00" stroke="#e0e0e0" stroke-width="1"/>
<text x="1095.8" y="126.1" font-size="9" font-weight="400" fill="#7a7a7a" text-anchor="start">May</text>
<text x="579.9" y="138.8" font-size="9" font-weight="400" fill="#7a7a7a" text-anchor="middle">12/28</text>
<line x1="594.70" y1="132.50" x2="594.70" y2="144.00" stroke="#e4e4e4" stroke-width="1"/>
<text x="609.6" y="138.8" font-size="9" font-weight="400" fill="#7a7a7a" text-anchor="middle">1/4</text>
<line x1="624.40" y1="132.50" x2="624.40" y2="144.00" stroke="#e4e4e4" stroke-width="1"/>
<text x="639.2" y="138.8" font-size="9" font-weight="400" fill="#7a7a7a" text-anchor="middle">1/11</text>
<line x1="654.10" y1="132.50" x2="654.10" y2="144.00" stroke="#e4e4e4" stroke-width="1"/>
<text x="669.0" y="138.8" font-size="9" font-weight="400" fill="#7a7a7a" text-anchor="middle">1/18</text>
<line x1="683.80" y1="132.50" x2="683.80" y2="144.00" stroke="#e4e4e4" stroke-width="1"/>
<text x="698.6" y="138.8" font-size="9" font-weight="400" fill="#7a7a7a" text-anchor="middle">1/25</text>
<line x1="713.50" y1="132.50" x2="713.50" y2="144.00" stroke="#e4e4e4" stroke-width="1"/>
<text x="728.4" y="138.8" font-size="9" font-weight="400" fill="#7a7a7a" text-anchor="middle">2/1</text>
<line x1="743.20" y1="132.50" x2="743.20" y2="144.00" stroke="#e4e4e4" stroke-width="1"/>
<text x="758.1" y="138.8" font-size="9" font-weight="400" fill="#7a7a7a" text-anchor="middle">2/8</text>
<line x1="772.90" y1="132.50" x2="772.90" y2="144.00" stroke="#e4e4e4" stroke-width="1"/>
<text x="787.8" y="138.8" font-size="9" font-weight="400" fill="#7a7a7a" text-anchor="middle">2/15</text>
<line x1="802.60" y1="132.50" x2="802.60" y2="144.00" stroke="#e4e4e4" stroke-width="1"/>
<text x="817.5" y="138.8" font-size="9" font-weight="400" fill="#7a7a7a" text-anchor="middle">2/22</text>
<line x1="832.30" y1="132.50" x2="832.30" y2="144.00" stroke="#e4e4e4" stroke-width="1"/>
<text x="847.1" y="138.8" font-size="9" font-weight="400" fill="#7a7a7a" text-anchor="middle">3/1</text>
<line x1="862.00" y1="132.50" x2="862.00" y2="144.00" stroke="#e4e4e4" stroke-width="1"/>
<text x="876.9" y="138.8" font-size="9" font-weight="400" fill="#7a7a7a" text-anchor="middle">3/8</text>
<line x1="891.70" y1="132.50" x2="891.70" y2="144.00" stroke="#e4e4e4" stroke-width="1"/>
<text x="906.6" y="138.8" font-size="9" font-weight="400" fill="#7a7a7a" text-anchor="middle">3/15</text>
<line x1="921.40" y1="132.50" x2="921.40" y2="144.00" stroke="#e4e4e4" stroke-width="1"/>
<text x="936.2" y="138.8" font-size="9" font-weight="400" fill="#7a7a7a" text-anchor="middle">3/22</text>
<line x1="951.10" y1="132.50" x2="951.10" y2="144.00" stroke="#e4e4e4" stroke-width="1"/>
<text x="965.9" y="138.8" font-size="9" font-weight="400" fill="#7a7a7a" text-anchor="middle">3/29</text>
<line x1="980.80" y1="132.50" x2="980.80" y2="144.00" stroke="#e4e4e4" stroke-width="1"/>
<text x="995.6" y="138.8" font-size="9" font-weight="400" fill="#7a7a7a" text-anchor="middle">4/5</text>
<line x1="1010.50" y1="132.50" x2="1010.50" y2="144.00" stroke="#e4e4e4" stroke-width="1"/>
<text x="1025.3" y="138.8" font-size="9" font-weight="400" fill="#7a7a7a" text-anchor="middle">4/12</text>
<line x1="1040.20" y1="132.50" x2="1040.20" y2="144.00" stroke="#e4e4e4" stroke-width="1"/>
<text x="1055.0" y="138.8" font-size="9" font-weight="400" fill="#7a7a7a" text-anchor="middle">4/19</text>
<line x1="1069.90" y1="132.50" x2="1069.90" y2="144.00" stroke="#e4e4e4" stroke-width="1"/>
<text x="1084.8" y="138.8" font-size="9" font-weight="400" fill="#7a7a7a" text-anchor="middle">4/26</text>
<line x1="1099.60" y1="132.50" x2="1099.60" y2="144.00" stroke="#e4e4e4" stroke-width="1"/>
<text x="1114.4" y="138.8" font-size="9" font-weight="400" fill="#7a7a7a" text-anchor="middle">5/3</text>
<line x1="1129.30" y1="132.50" x2="1129.30" y2="144.00" stroke="#e4e4e4" stroke-width="1"/>
<text x="1144.1" y="138.8" font-size="9" font-weight="400" fill="#7a7a7a" text-anchor="middle">5/10</text>
<line x1="1159.00" y1="132.50" x2="1159.00" y2="144.00" stroke="#e4e4e4" stroke-width="1"/>
<text x="1173.8" y="138.8" font-size="9" font-weight="400" fill="#7a7a7a" text-anchor="middle">5/17</text>
<line x1="1188.70" y1="132.50" x2="1188.70" y2="144.00" stroke="#e4e4e4" stroke-width="1"/>
<text x="1203.5" y="138.8" font-size="9" font-weight="400" fill="#7a7a7a" text-anchor="middle">5/24</text>
<line x1="1221.80" y1="114.40" x2="1221.80" y2="642.00" stroke="#d0d0d0" stroke-width="1"/>
<line x1="564.60" y1="144.20" x2="1222.00" y2="144.20" stroke="#cfcfcf" stroke-width="1"/>
<line x1="565.00" y1="178.60" x2="1221.00" y2="178.60" stroke="#6a6a6a" stroke-width="1" stroke-dasharray="1,2"/>
<line x1="565.00" y1="195.80" x2="1221.00" y2="195.80" stroke="#6a6a6a" stroke-width="1" stroke-dasharray="1,2"/>
<line x1="565.00" y1="213.00" x2="1221.00" y2="213.00" stroke="#6a6a6a" stroke-width="1" stroke-dasharray="1,2"/>
<line x1="565.00" y1="230.20" x2="1221.00" y2="230.20" stroke="#6a6a6a" stroke-width="1" stroke-dasharray="1,2"/>
<line x1="565.00" y1="247.40" x2="1221.00" y2="247.40" stroke="#6a6a6a" stroke-width="1" stroke-dasharray="1,2"/>
<line x1="565.00" y1="264.60" x2="1221.00" y2="264.60" stroke="#6a6a6a" stroke-width="1" stroke-dasharray="1,2"/>
<line x1="565.00" y1="281.80" x2="1221.00" y2="281.80" stroke="#6a6a6a" stroke-width="1" stroke-dasharray="1,2"/>
<line x1="565.00" y1="299.00" x2="1221.00" y2="299.00" stroke="#6a6a6a" stroke-width="1" stroke-dasharray="1,2"/>
<line x1="565.00" y1="316.20" x2="1221.00" y2="316.20" stroke="#6a6a6a" stroke-width="1" stroke-dasharray="1,2"/>
<line x1="565.00" y1="333.40" x2="1221.00" y2="333.40" stroke="#6a6a6a" stroke-width="1" stroke-dasharray="1,2"/>
<line x1="565.00" y1="350.60" x2="1221.00" y2="350.60" stroke="#6a6a6a" stroke-width="1" stroke-dasharray="1,2"/>
<line x1="565.00" y1="367.80" x2="1221.00" y2="367.80" stroke="#6a6a6a" stroke-width="1" stroke-dasharray="1,2"/>
<line x1="565.00" y1="385.00" x2="1221.00" y2="385.00" stroke="#6a6a6a" stroke-width="1" stroke-dasharray="1,2"/>
<line x1="565.00" y1="402.20" x2="1221.00" y2="402.20" stroke="#6a6a6a" stroke-width="1" stroke-dasharray="1,2"/>
<line x1="565.00" y1="419.40" x2="1221.00" y2="419.40" stroke="#6a6a6a" stroke-width="1" stroke-dasharray="1,2"/>
<line x1="565.00" y1="436.60" x2="1221.00" y2="436.60" stroke="#6a6a6a" stroke-width="1" stroke-dasharray="1,2"/>
<line x1="565.00" y1="453.80" x2="1221.00" y2="453.80" stroke="#6a6a6a" stroke-width="1" stroke-dasharray="1,2"/>
<line x1="565.00" y1="471.00" x2="1221.00" y2="471.00" stroke="#6a6a6a" stroke-width="1" stroke-dasharray="1,2"/>
<line x1="565.00" y1="488.20" x2="1221.00" y2="488.20" stroke="#6a6a6a" stroke-width="1" stroke-dasharray="1,2"/>
<line x1="565.00" y1="505.40" x2="1221.00" y2="505.40" stroke="#6a6a6a" stroke-width="1" stroke-dasharray="1,2"/>
<line x1="565.00" y1="522.60" x2="1221.00" y2="522.60" stroke="#6a6a6a" stroke-width="1" stroke-dasharray="1,2"/>
<line x1="565.00" y1="539.80" x2="1221.00" y2="539.80" stroke="#6a6a6a" stroke-width="1" stroke-dasharray="1,2"/>
<line x1="565.00" y1="557.00" x2="1221.00" y2="557.00" stroke="#6a6a6a" stroke-width="1" stroke-dasharray="1,2"/>
<line x1="565.00" y1="574.20" x2="1221.00" y2="574.20" stroke="#6a6a6a" stroke-width="1" stroke-dasharray="1,2"/>
<line x1="565.00" y1="591.40" x2="1221.00" y2="591.40" stroke="#6a6a6a" stroke-width="1" stroke-dasharray="1,2"/>
<line x1="565.00" y1="608.60" x2="1221.00" y2="608.60" stroke="#6a6a6a" stroke-width="1" stroke-dasharray="1,2"/>
<line x1="565.00" y1="625.80" x2="1221.00" y2="625.80" stroke="#6a6a6a" stroke-width="1" stroke-dasharray="1,2"/>
<line x1="564.60" y1="161.40" x2="1222.00" y2="161.40" stroke="#6a6a6a" stroke-width="1.2"/>
<line x1="594.70" y1="145.20" x2="594.70" y2="642.00" stroke="#6a6a6a" stroke-width="1" stroke-dasharray="1,2"/>
<line x1="624.40" y1="145.20" x2="624.40" y2="642.00" stroke="#6a6a6a" stroke-width="1" stroke-dasharray="1,2"/>
<line x1="654.10" y1="145.20" x2="654.10" y2="642.00" stroke="#6a6a6a" stroke-width="1" stroke-dasharray="1,2"/>
<line x1="683.80" y1="145.20" x2="683.80" y2="642.00" stroke="#6a6a6a" stroke-width="1" stroke-dasharray="1,2"/>
<line x1="713.50" y1="145.20" x2="713.50" y2="642.00" stroke="#6a6a6a" stroke-width="1" stroke-dasharray="1,2"/>
<line x1="743.20" y1="145.20" x2="743.20" y2="642.00" stroke="#6a6a6a" stroke-width="1" stroke-dasharray="1,2"/>
<line x1="772.90" y1="145.20" x2="772.90" y2="642.00" stroke="#6a6a6a" stroke-width="1" stroke-dasharray="1,2"/>
<line x1="802.60" y1="145.20" x2="802.60" y2="642.00" stroke="#6a6a6a" stroke-width="1" stroke-dasharray="1,2"/>
<line x1="832.30" y1="145.20" x2="832.30" y2="642.00" stroke="#6a6a6a" stroke-width="1" stroke-dasharray="1,2"/>
<line x1="862.00" y1="145.20" x2="862.00" y2="642.00" stroke="#6a6a6a" stroke-width="1" stroke-dasharray="1,2"/>
<line x1="891.70" y1="145.20" x2="891.70" y2="642.00" stroke="#6a6a6a" stroke-width="1" stroke-dasharray="1,2"/>
<line x1="921.40" y1="145.20" x2="921.40" y2="642.00" stroke="#6a6a6a" stroke-width="1" stroke-dasharray="1,2"/>
<line x1="951.10" y1="145.20" x2="951.10" y2="642.00" stroke="#6a6a6a" stroke-width="1" stroke-dasharray="1,2"/>
<line x1="980.80" y1="145.20" x2="980.80" y2="642.00" stroke="#6a6a6a" stroke-width="1" stroke-dasharray="1,2"/>
<line x1="1010.50" y1="145.20" x2="1010.50" y2="642.00" stroke="#6a6a6a" stroke-width="1" stroke-dasharray="1,2"/>
<line x1="1040.20" y1="145.20" x2="1040.20" y2="642.00" stroke="#6a6a6a" stroke-width="1" stroke-dasharray="1,2"/>
<line x1="1069.90" y1="145.20" x2="1069.90" y2="642.00" stroke="#6a6a6a" stroke-width="1" stroke-dasharray="1,2"/>
<line x1="1099.60" y1="145.20" x2="1099.60" y2="642.00" stroke="#6a6a6a" stroke-width="1" stroke-dasharray="1,2"/>
<line x1="1129.30" y1="145.20" x2="1129.30" y2="642.00" stroke="#6a6a6a" stroke-width="1" stroke-dasharray="1,2"/>
<line x1="1159.00" y1="145.20" x2="1159.00" y2="642.00" stroke="#6a6a6a" stroke-width="1" stroke-dasharray="1,2"/>
<line x1="1188.70" y1="145.20" x2="1188.70" y2="642.00" stroke="#6a6a6a" stroke-width="1" stroke-dasharray="1,2"/>
<line x1="1218.40" y1="145.20" x2="1218.40" y2="642.00" stroke="#6a6a6a" stroke-width="1" stroke-dasharray="1,2"/>
<line x1="598.30" y1="145.20" x2="598.30" y2="642.00" stroke="#6a6a6a" stroke-width="1" stroke-dasharray="1,2"/>
<line x1="1048.60" y1="145.20" x2="1048.60" y2="642.00" stroke="#6a6a6a" stroke-width="1" stroke-dasharray="1,2"/>
<line x1="582.10" y1="144.20" x2="582.10" y2="642.00" stroke="#a8a8a8" stroke-width="1.3"/>
<line x1="713.50" y1="144.20" x2="713.50" y2="642.00" stroke="#666666" stroke-width="1.2"/>
<line x1="832.40" y1="144.20" x2="832.40" y2="642.00" stroke="#8c8c8c" stroke-width="1.3"/>
<line x1="963.50" y1="144.20" x2="963.50" y2="642.00" stroke="#444444" stroke-width="1.2"/>
<line x1="1091.00" y1="144.20" x2="1091.00" y2="642.00" stroke="#9a9a9a" stroke-width="1.8"/>
<line x1="879.50" y1="427.90" x2="968.90" y2="427.90" stroke="#6b9bd6" stroke-width="1"/>
<line x1="790.10" y1="479.50" x2="968.90" y2="479.50" stroke="#6b9bd6" stroke-width="1"/>
<line x1="790.20" y1="531.10" x2="968.90" y2="531.10" stroke="#6b9bd6" stroke-width="1"/>
<line x1="811.50" y1="548.30" x2="968.90" y2="548.30" stroke="#6b9bd6" stroke-width="1"/>
<path d="M840.8 410.7 H966.3 Q968.9 410.7 968.9 413.3 V576.2" fill="none" stroke="#8fb2e2" stroke-width="1.6"/>
<path d="M608.5 225.8 V218.9 H675.0 V225.8" fill="none" stroke="#5e5e5e" stroke-width="2.0"/>
<path d="M689.7 260.2 V253.3 H933.8 V260.2" fill="none" stroke="#5e5e5e" stroke-width="2.0"/>
<path d="M689.7 277.4 V270.5 H781.2 V277.4" fill="none" stroke="#5e5e5e" stroke-width="2.0"/>
<path d="M761.5 363.4 V356.5 H933.8 V363.4" fill="none" stroke="#5e5e5e" stroke-width="2.0"/>
<path d="M748.5 466.6 V459.7 H789.5 V466.6" fill="none" stroke="#5e5e5e" stroke-width="2.0"/>
<path d="M782.9 501.0 V494.1 H968.0 V501.0" fill="none" stroke="#5e5e5e" stroke-width="2.0"/>
<path d="M969.9 569.8 V562.9 H1048.0 V569.8" fill="none" stroke="#5e5e5e" stroke-width="2.0"/>
<rect x="608.90" y="182.80" width="439.10" height="8.50" fill="#e98a86"/>
<rect x="608.90" y="234.40" width="66.60" height="8.50" fill="#e98a86"/>
<rect x="689.70" y="286.00" width="45.30" height="8.50" fill="#e98a86"/>
<rect x="689.80" y="303.20" width="61.80" height="8.50" fill="#e98a86"/>
<rect x="748.80" y="320.40" width="11.40" height="8.50" fill="#e98a86"/>
<rect x="753.10" y="337.60" width="28.90" height="8.50" fill="#e98a86"/>
<rect x="761.50" y="372.00" width="58.50" height="8.50" fill="#e98a86"/>
<rect x="782.60" y="389.20" width="37.40" height="8.50" fill="#e98a86"/>
<rect x="821.30" y="406.40" width="19.50" height="8.50" fill="#a6c3e8"/>
<rect x="821.30" y="423.60" width="58.20" height="8.50" fill="#a6c3e8"/>
<rect x="846.50" y="440.80" width="87.70" height="8.50" fill="#e98a86"/>
<rect x="748.90" y="475.20" width="41.20" height="8.50" fill="#a6c3e8"/>
<rect x="936.40" y="509.60" width="32.60" height="8.50" fill="#e98a86"/>
<rect x="782.90" y="526.80" width="7.30" height="8.50" fill="#a6c3e8"/>
<rect x="782.90" y="544.00" width="28.60" height="8.50" fill="#a6c3e8"/>
<rect x="969.60" y="578.40" width="78.50" height="8.50" fill="#e98a86"/>
<path d="M595.5 153.0 H592.5 Q590.5 153.0 590.5 155.0 V168.2 Q590.5 170.2 592.5 170.2 H600" fill="none" stroke="#333" stroke-width="1.4"/>
<path d="M596.8 166.6 V173.8 L602.0 170.2 Z" fill="#111" stroke="none" stroke-width="1"/>
<path d="M599.3 170.2 V236.8 Q599.3 238.8 601.3 238.8 H605" fill="none" stroke="#444" stroke-width="1.2"/>
<path d="M599.3 185.2 Q599.3 187.2 601.3 187.2 H605" fill="none" stroke="#444" stroke-width="1.2"/>
<path d="M603.7 183.6 V190.8 L608.9 187.2 Z" fill="#111" stroke="none" stroke-width="1"/>
<path d="M603.7 235.2 V242.4 L608.9 238.8 Z" fill="#111" stroke="none" stroke-width="1"/>
<path d="M598.2 149.1 L602.1 153.0 L598.2 156.9 L594.3 153.0 Z" fill="#7a7a7a" stroke="none" stroke-width="1"/>
<line x1="598.20" y1="149.10" x2="598.20" y2="156.90" stroke="#f4f4f4" stroke-width="0.9"/>
<path d="M606.7 165.8 L611.1 170.2 L606.7 174.6 L602.3 170.2 Z" fill="#666" stroke="none" stroke-width="1"/>
<path d="M675.5 238.8 H689.2 V300.3" fill="none" stroke="#c8463a" stroke-width="1"/>
<path d="M686.0 282.3 H692.4 L689.2 286.1 Z" fill="#c8463a" stroke="none" stroke-width="1"/>
<path d="M686.0 299.5 H692.4 L689.2 303.3 Z" fill="#c8463a" stroke="none" stroke-width="1"/>
<path d="M735.0 290.4 H748.3 V472.3" fill="none" stroke="#c8463a" stroke-width="1"/>
<path d="M745.1 316.7 H751.5 L748.3 320.5 Z" fill="#c8463a" stroke="none" stroke-width="1"/>
<path d="M745.1 471.5 H751.5 L748.3 475.3 Z" fill="#c8463a" stroke="none" stroke-width="1"/>
<path d="M751.6 307.6 H754.2 V334.7" fill="none" stroke="#c8463a" stroke-width="1"/>
<path d="M751.0 333.9 H757.4 L754.2 337.7 Z" fill="#c8463a" stroke="none" stroke-width="1"/>
<path d="M760.2 324.8 H763.3 V369.1" fill="none" stroke="#c8463a" stroke-width="1"/>
<path d="M760.1 368.3 H766.5 L763.3 372.1 Z" fill="#c8463a" stroke="none" stroke-width="1"/>
<path d="M782.0 342.0 H784.3 V541.1" fill="none" stroke="#c8463a" stroke-width="1"/>
<path d="M781.1 385.5 H787.5 L784.3 389.3 Z" fill="#c8463a" stroke="none" stroke-width="1"/>
<path d="M781.1 523.1 H787.5 L784.3 526.9 Z" fill="#c8463a" stroke="none" stroke-width="1"/>
<path d="M781.1 540.3 H787.5 L784.3 544.1 Z" fill="#c8463a" stroke="none" stroke-width="1"/>
<path d="M820.0 376.4 H822.4 V420.7" fill="none" stroke="#c8463a" stroke-width="1"/>
<path d="M819.2 402.7 H825.6 L822.4 406.5 Z" fill="#c8463a" stroke="none" stroke-width="1"/>
<path d="M819.2 419.9 H825.6 L822.4 423.7 Z" fill="#c8463a" stroke="none" stroke-width="1"/>
<path d="M820.0 393.6 H846.3 V437.9" fill="none" stroke="#c8463a" stroke-width="1"/>
<path d="M843.1 437.1 H849.5 L846.3 440.9 Z" fill="#c8463a" stroke="none" stroke-width="1"/>
<path d="M934.2 445.2 H936.5 V506.7" fill="none" stroke="#e7857b" stroke-width="1"/>
<path d="M933.3 505.9 H939.7 L936.5 509.7 Z" fill="#e7857b" stroke="none" stroke-width="1"/>
<path d="M969.0 514.0 H971.0 V575.5" fill="none" stroke="#e7857b" stroke-width="1"/>
<path d="M967.8 574.7 H974.2 L971.0 578.5 Z" fill="#e7857b" stroke="none" stroke-width="1"/>
<path d="M965.7 574.7 H972.1 L968.9 578.5 Z" fill="#5a8ad0" stroke="none" stroke-width="1"/>
<path d="M1052.5 187.2 H1055.3 V204.4" fill="none" stroke="#444" stroke-width="1.2"/>
<path d="M1048.8 187.2 l4.6 -3.6 v7.2 z" fill="#111" stroke="none" stroke-width="1"/>
<path d="M1055.7 204.4 V582.8 H1048.1" fill="none" stroke="#e7857b" stroke-width="1"/>
<path d="M1052 204.4 H1055.7" fill="none" stroke="#c8463a" stroke-width="1"/>
<path d="M1048.7 201.1 L1044.9 204.4 L1048.7 207.7 Z" fill="#666" stroke="none" stroke-width="1"/>
<path d="M1048.4 204.4 l4.2 -3.6 v7.2 z" fill="#d24a3a" stroke="none" stroke-width="1"/>
<line x1="1052.20" y1="201.40" x2="1052.20" y2="207.40" stroke="#d24a3a" stroke-width="1.2"/>
<text x="1054.2" y="189.3" font-size="10.5" font-weight="700" fill="#151515" text-anchor="start" textLength="99.2" lengthAdjust="spacingAndGlyphs" stroke="#151515" stroke-width="0.3">Project Management</text>
<text x="680.7" y="240.9" font-size="10.5" font-weight="700" fill="#151515" text-anchor="start" textLength="40.3" lengthAdjust="spacingAndGlyphs" stroke="#151515" stroke-width="0.3">Mobilize</text>
<text x="740.2" y="292.5" font-size="10.5" font-weight="700" fill="#151515" text-anchor="start" textLength="48.5" lengthAdjust="spacingAndGlyphs" stroke="#151515" stroke-width="0.3">Grade Site</text>
<text x="757.0" y="309.7" font-size="10.5" font-weight="700" fill="#151515" text-anchor="start" textLength="78.3" lengthAdjust="spacingAndGlyphs" stroke="#151515" stroke-width="0.3">Set Foundations</text>
<text x="765.6" y="326.9" font-size="10.5" font-weight="700" fill="#151515" text-anchor="start" textLength="69.4" lengthAdjust="spacingAndGlyphs" stroke="#151515" stroke-width="0.3">Install Conduit</text>
<text x="787.0" y="344.1" font-size="10.5" font-weight="700" fill="#151515" text-anchor="start" textLength="81.7" lengthAdjust="spacingAndGlyphs" stroke="#151515" stroke-width="0.3">Dig Cable Trench</text>
<text x="825.5" y="378.5" font-size="10.5" font-weight="700" fill="#151515" text-anchor="start" textLength="104.5" lengthAdjust="spacingAndGlyphs" stroke="#151515" stroke-width="0.3">Erect Steel Structures</text>
<text x="824.5" y="395.7" font-size="10.5" font-weight="700" fill="#151515" text-anchor="start" textLength="83.3" lengthAdjust="spacingAndGlyphs" stroke="#151515" stroke-width="0.3">Install Equipment</text>
<text x="846.3" y="412.9" font-size="10.5" font-weight="700" fill="#151515" text-anchor="start" textLength="82.8" lengthAdjust="spacingAndGlyphs" stroke="#151515" stroke-width="0.3">Install Grounding</text>
<text x="884.5" y="430.1" font-size="10.5" font-weight="700" fill="#151515" text-anchor="start" textLength="115.6" lengthAdjust="spacingAndGlyphs" stroke="#151515" stroke-width="0.3">Install Bus and Jumpers</text>
<text x="939.3" y="447.3" font-size="10.5" font-weight="700" fill="#151515" text-anchor="start" textLength="85.6" lengthAdjust="spacingAndGlyphs" stroke="#151515" stroke-width="0.3">Lay Control Cable</text>
<text x="795.3" y="481.7" font-size="10.5" font-weight="700" fill="#151515" text-anchor="start" textLength="60.6" lengthAdjust="spacingAndGlyphs" stroke="#151515" stroke-width="0.3">Install Fence</text>
<text x="973.8" y="516.1" font-size="10.5" font-weight="700" fill="#151515" text-anchor="start" textLength="93.3" lengthAdjust="spacingAndGlyphs" stroke="#151515" stroke-width="0.3">Remove Equipment</text>
<text x="795.7" y="533.3" font-size="10.5" font-weight="700" fill="#151515" text-anchor="start" textLength="57.2" lengthAdjust="spacingAndGlyphs" stroke="#151515" stroke-width="0.3">Lay Stoning</text>
<text x="816.6" y="550.5" font-size="10.5" font-weight="700" fill="#151515" text-anchor="start" textLength="63.9" lengthAdjust="spacingAndGlyphs" stroke="#151515" stroke-width="0.3">Lay Roadway</text>
<text x="1054.6" y="584.9" font-size="10.5" font-weight="700" fill="#151515" text-anchor="start" textLength="114.4" lengthAdjust="spacingAndGlyphs" stroke="#151515" stroke-width="0.3">Substaintial Completion</text>
<rect x="0.00" y="0.90" width="1225.00" height="1.90" fill="#000"/>
<rect x="0.00" y="0.90" width="1.90" height="643.70" fill="#000"/>
<rect x="1222.10" y="0.90" width="2.90" height="643.70" fill="#000"/>
<rect x="0.00" y="642.50" width="1225.00" height="2.10" fill="#000"/>
</svg>
</body></html>
